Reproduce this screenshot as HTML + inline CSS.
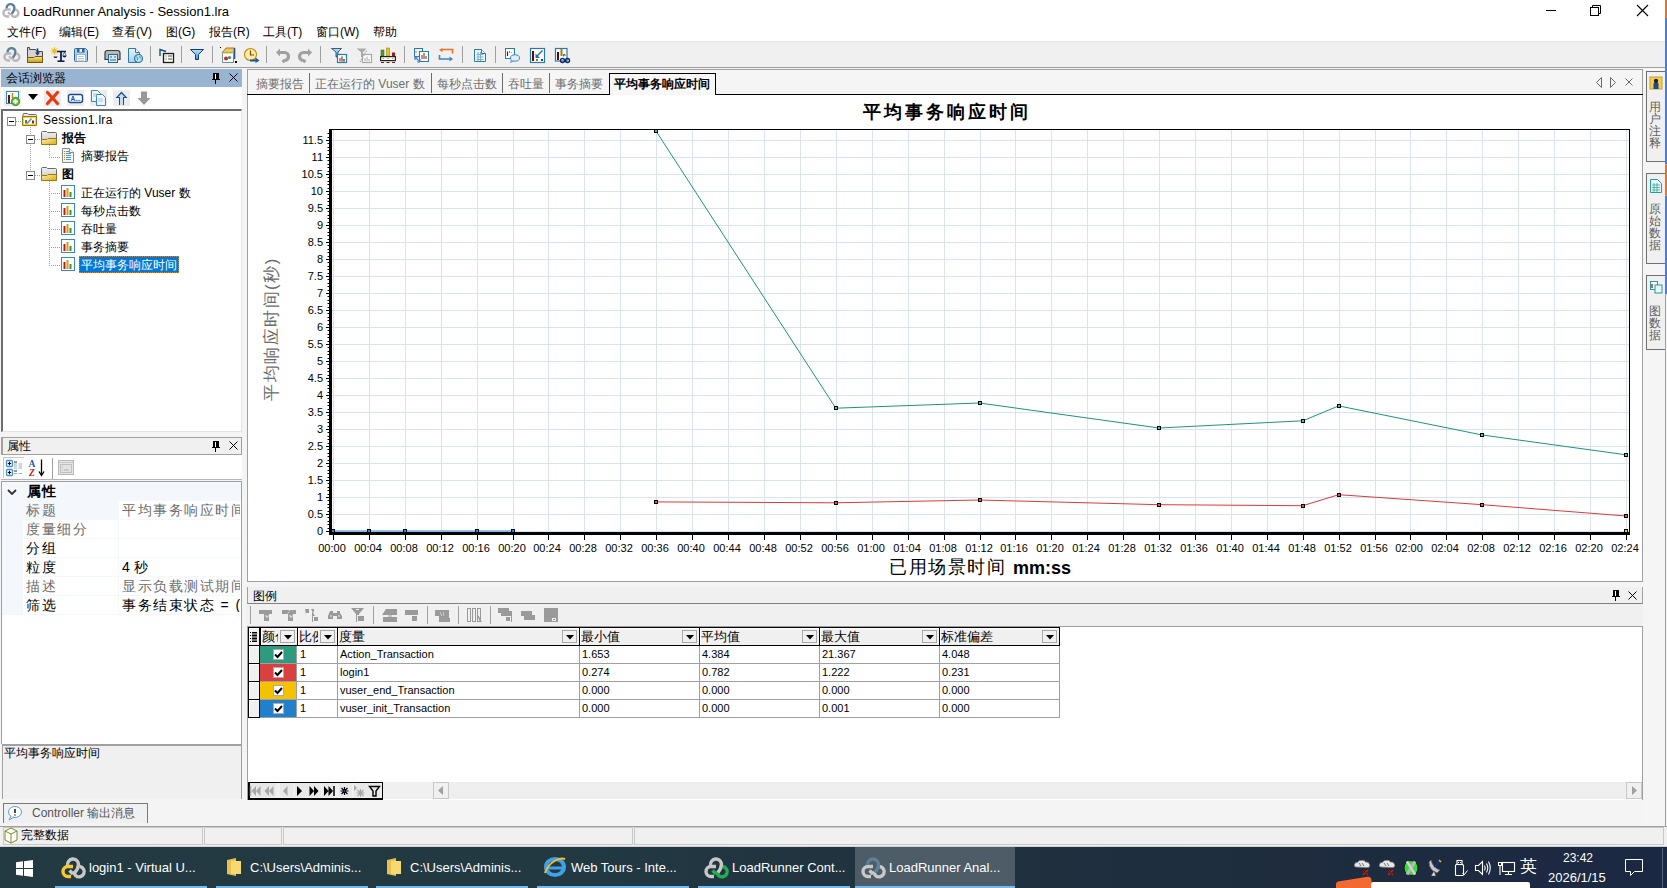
<!DOCTYPE html><html><head><meta charset="utf-8"><style>
*{margin:0;padding:0;box-sizing:border-box}
html,body{width:1667px;height:888px;overflow:hidden;background:#f0f0f0;font-family:"Liberation Sans",sans-serif;font-size:12px;color:#000}
.ab{position:absolute}
.t{position:absolute;white-space:nowrap;line-height:1}
svg{position:absolute;overflow:visible}
</style></head><body>
<div class="ab" style="left:0px;top:0px;width:1667px;height:41px;background:#fff"></div>
<svg style="left:2px;top:2px" width="17" height="17" viewBox="0 0 24 24"><path d="M12 15.5L14.5 19.5A5.2 5.2 0 1 0 18.5 10.5" fill="none" stroke="#b9b9b9" stroke-width="3.4"/><path d="M12 10.5H7A5 5 0 0 0 7 20.5H10" fill="none" stroke="#b9b9b9" stroke-width="3.4"/><path d="M6.5 9A5.5 5.5 0 0 1 17.5 8Q17.5 12 14 16.5" fill="none" stroke="#5f8099" stroke-width="3.4"/><path d="M8.5 14.5L12 18" fill="none" stroke="#b9b9b9" stroke-width="3.4"/></svg>
<div class="t" style="left:23px;top:5px;font-size:13px">LoadRunner Analysis - Session1.lra</div>
<div class="ab" style="left:1546px;top:10px;width:10px;height:1px;background:#000"></div>
<svg style="left:1589px;top:4px" width="14" height="13"><rect x="1.5" y="3.5" width="8" height="8" fill="none" stroke="#000"/><path d="M3.5 3.5V1.5h8v8h-2" fill="none" stroke="#000"/></svg>
<svg style="left:1636px;top:4px" width="13" height="13"><path d="M1 1L12 12M12 1L1 12" stroke="#000" stroke-width="1.1"/></svg>
<div class="t" style="left:7px;top:26px;font-size:12px">文件(F)</div>
<div class="t" style="left:59px;top:26px;font-size:12px">编辑(E)</div>
<div class="t" style="left:112px;top:26px;font-size:12px">查看(V)</div>
<div class="t" style="left:166px;top:26px;font-size:12px">图(G)</div>
<div class="t" style="left:209px;top:26px;font-size:12px">报告(R)</div>
<div class="t" style="left:263px;top:26px;font-size:12px">工具(T)</div>
<div class="t" style="left:316px;top:26px;font-size:12px">窗口(W)</div>
<div class="t" style="left:373px;top:26px;font-size:12px">帮助</div>
<div class="ab" style="left:0px;top:41px;width:1667px;height:1px;background:#e3e3e3"></div>
<div class="ab" style="left:0px;top:42px;width:1667px;height:25px;background:#f0f0f0"></div>
<div class="ab" style="left:0px;top:67px;width:1667px;height:1px;background:#a0a0a0"></div>
<div class="ab" style="left:96px;top:46px;width:1px;height:17px;background:#a0a0a0"></div>
<div class="ab" style="left:150px;top:46px;width:1px;height:17px;background:#a0a0a0"></div>
<div class="ab" style="left:181px;top:46px;width:1px;height:17px;background:#a0a0a0"></div>
<div class="ab" style="left:212px;top:46px;width:1px;height:17px;background:#a0a0a0"></div>
<div class="ab" style="left:266px;top:46px;width:1px;height:17px;background:#a0a0a0"></div>
<div class="ab" style="left:320px;top:46px;width:1px;height:17px;background:#a0a0a0"></div>
<div class="ab" style="left:404px;top:46px;width:1px;height:17px;background:#a0a0a0"></div>
<div class="ab" style="left:462px;top:46px;width:1px;height:17px;background:#a0a0a0"></div>
<div class="ab" style="left:495px;top:46px;width:1px;height:17px;background:#a0a0a0"></div>
<svg style="left:0;top:0" width="1" height="1"><defs><linearGradient id="gy" x1="0" y1="0" x2="0" y2="1"><stop offset="0" stop-color="#f8e890"/><stop offset="1" stop-color="#c89a10"/></linearGradient><linearGradient id="gb" x1="0" y1="0" x2="0" y2="1"><stop offset="0" stop-color="#e8f4fc"/><stop offset="1" stop-color="#a8d0ec"/></linearGradient><linearGradient id="gf" x1="0" y1="0" x2="0" y2="1"><stop offset="0" stop-color="#b8e4fa"/><stop offset="1" stop-color="#3a9ad8"/></linearGradient></defs></svg>
<svg style="left:3px;top:46px" width="17" height="17" viewBox="0 0 24 24"><path d="M12 15.5L14.5 19.5A5.2 5.2 0 1 0 18.5 10.5" fill="none" stroke="#b9b9b9" stroke-width="3.4"/><path d="M12 10.5H7A5 5 0 0 0 7 20.5H10" fill="none" stroke="#b9b9b9" stroke-width="3.4"/><path d="M6.5 9A5.5 5.5 0 0 1 17.5 8Q17.5 12 14 16.5" fill="none" stroke="#5f8099" stroke-width="3.4"/><path d="M8.5 14.5L12 18" fill="none" stroke="#b9b9b9" stroke-width="3.4"/></svg>
<svg style="left:27px;top:47px" width="17" height="16" viewBox="0 0 17 16"><path d="M0.5 15.5V0.5H2.5V2.5H8.5L10 4.5H15.5V15.5z" fill="#d4d4d4" stroke="#4a4a4a"/><path d="M0.5 15.5V10.5H7L8 9.5H15.5V15.5z" fill="url(#gy)" stroke="#6a5a10"/><path d="M10.5 1.5V7.5" stroke="#1a3a78" stroke-width="1.8"/><path d="M8 5.5L10.5 8.5L13 5.5z" fill="#1a3a78"/></svg>
<svg style="left:51px;top:47px" width="15" height="15" viewBox="0 0 15 15"><circle cx="3.5" cy="4" r="2.2" fill="#f2b400"/><path d="M3.5 0V8M-0.5 4H7.5M0.7 1.2L6.3 6.8M6.3 1.2L0.7 6.8" stroke="#f2c030" stroke-width="0.9"/><path d="M6 4.5H15" stroke="#0a2050" stroke-width="1.5"/><path d="M10 4V14" stroke="#0a2050" stroke-width="1.8"/><path d="M6.5 14.2H13.5" stroke="#0a2050" stroke-width="1.6"/><path d="M2.5 9.5a2 1.6 0 0 0 4 0z" fill="#0a2050"/><path d="M11.5 8.5a2 2 0 0 0 4 0z" fill="#0a2050"/><path d="M13.5 5L11.8 8.5M13.5 5L15.2 8.5" stroke="#0a2050" stroke-width="0.6"/></svg>
<svg style="left:74px;top:48px" width="14" height="14" viewBox="0 0 14 14"><path d="M0.5 1.5Q0.5 0.5 1.5 0.5H11.5L13.5 2.5V12.5Q13.5 13.5 12.5 13.5H1.5Q0.5 13.5 0.5 12.5z" fill="#a8d2ee" stroke="#2a6a9a"/><rect x="3" y="0.5" width="7.5" height="4" fill="#34678f"/><rect x="5.5" y="1" width="2.5" height="3" fill="#e8e8e8"/><rect x="2.5" y="6.5" width="9" height="7" fill="#fff" stroke="#7a9ab0" stroke-width="0.6"/><path d="M4 8.5H10M4 10.5H10M4 12.2H10" stroke="#9ab0c0" stroke-width="0.7"/></svg>
<svg style="left:104px;top:48px" width="17" height="15" viewBox="0 0 17 15"><path d="M1 11.5V5Q1 2.5 3.5 2.5H13.5Q16 2.5 16 5V11.5z" fill="#b8b8b8" stroke="#3a3a3a" stroke-width="1.2"/><rect x="4.5" y="6.5" width="9" height="8" fill="#d8eaf6" stroke="#1e6a9e"/><path d="M6 9H8M6 12H12M10 9H12" stroke="#1e6a9e"/></svg>
<svg style="left:128px;top:48px" width="15" height="15" viewBox="0 0 15 15"><path d="M0.5 0.5H7.5L11.5 4.5V14.5H0.5z" fill="url(#gb)" stroke="#2a7aaa"/><path d="M7.5 0.5V4.5H11.5" fill="#fff" stroke="#2a7aaa"/><circle cx="10.5" cy="10.5" r="4" fill="#b8dcf2" stroke="#2a7aaa" stroke-width="1.2"/><path d="M8.5 8.5Q10 10 9.5 12M11.5 8Q12 10 13 10.5" stroke="#2a7aaa" stroke-width="0.8" fill="none"/></svg>
<svg style="left:159px;top:48px" width="15" height="15" viewBox="0 0 15 15"><path d="M1 8V1.5L7 3.5" fill="none" stroke="#1a4a8a" stroke-width="1.4"/><rect x="4.5" y="5.5" width="10" height="9" fill="#f8f8f0" stroke="#1a1a1a" stroke-width="1.3"/><path d="M6.5 8H7.5M6.5 11H7.5M9 8H13M9 11H13" stroke="#555" stroke-width="1.2"/></svg>
<svg style="left:190px;top:49px" width="14" height="11" viewBox="0 0 14 11"><path d="M0.5 0.5H13.5L8.5 5.5V10.5H5.5V5.5z" fill="url(#gf)" stroke="#1a3a5a"/></svg>
<svg style="left:220px;top:47px" width="17" height="16" viewBox="0 0 17 16"><path d="M2 6L6 1H14.5V6z" fill="#e8c860" stroke="#a08020"/><path d="M14.5 1V12" stroke="#2a4a9a" stroke-width="1.6"/><path d="M2.5 6.5V15.5H13.5V6.5" fill="#fff" stroke="#6a8ab0"/><circle cx="6" cy="11.5" r="2" fill="#d02030"/><circle cx="9.5" cy="10.5" r="1.6" fill="#20a040"/><rect x="15" y="14" width="2" height="2" fill="#000"/><rect x="0" y="0" width="1" height="1" fill="#000"/></svg>
<svg style="left:244px;top:48px" width="16" height="15" viewBox="0 0 16 15"><circle cx="6.5" cy="6.5" r="6" fill="#fde9a8" stroke="#c8880a" stroke-width="1.1"/><path d="M6.5 2.5V7H10" stroke="#7a5000" stroke-width="1.2" fill="none"/><path d="M6 12.5H12" stroke="#1a5a9a" stroke-width="2"/><path d="M11.5 9.5L15.5 12.5L11.5 15z" fill="#1a5a9a"/></svg>
<svg style="left:276px;top:48px" width="14" height="15" viewBox="0 0 14 15"><path d="M3 4.5H8.5A4 4 0 0 1 8.5 12.5L6.5 14" fill="none" stroke="#a0a0a0" stroke-width="3.2"/><path d="M0 4.5L4 0.5V8.5z" fill="#a0a0a0"/></svg>
<svg style="left:298px;top:48px" width="14" height="15" viewBox="0 0 14 15"><path d="M11 4.5H5.5A4 4 0 0 0 5.5 12.5L7.5 14" fill="none" stroke="#a0a0a0" stroke-width="3.2"/><path d="M14 4.5L10 0.5V8.5z" fill="#a0a0a0"/></svg>
<svg style="left:331px;top:48px" width="16" height="15" viewBox="0 0 16 15"><path d="M0.5 0.5H10.5L7 4V9H5V4z" fill="url(#gf)" stroke="#1a3a5a" stroke-width="0.8"/><rect x="6.5" y="6.5" width="9" height="8" fill="#fff" stroke="#2a7aaa" stroke-width="1.2"/><path d="M9 13.5V10M11 13.5V8.5M13 13.5V11" stroke="#8a1a1a" stroke-width="1"/><path d="M11 13.5V8.5" stroke="#b09010"/><path d="M13 13.5V11" stroke="#307030"/></svg>
<svg style="left:356px;top:48px" width="16" height="15" viewBox="0 0 16 15"><path d="M0.5 0.5H10.5L7 4V9H5V4z" fill="#a8a8a8"/><rect x="6.5" y="6.5" width="9" height="8" fill="#fff" stroke="#a8a8a8" stroke-width="1.2"/><path d="M9 13.5V10M11 13.5V8.5M13 13.5V11" stroke="#a8a8a8"/><path d="M4 14L11 2" stroke="#a8a8a8" stroke-width="1.2" stroke-dasharray="1.5 0.8"/></svg>
<svg style="left:380px;top:48px" width="16" height="15" viewBox="0 0 16 15"><rect x="1" y="2" width="3" height="6" fill="#4aa020" stroke="#2a6010" stroke-width="0.5"/><rect x="6.5" y="0" width="3" height="8" fill="#e8c020" stroke="#8a7010" stroke-width="0.5"/><rect x="12" y="4.5" width="3" height="3.5" fill="#b01010"/><rect x="0.6" y="8.6" width="14.8" height="4" fill="#fff" stroke="#222" stroke-width="1.2"/><path d="M2.5 10.6H4M7.5 10.6H9M12 10.6H13.5" stroke="#c0a020"/><path d="M1 14.5H4M6.5 14.5H9.5M12 14.5H15" stroke="#6a1a1a" stroke-width="1"/></svg>
<svg style="left:414px;top:48px" width="15" height="15" viewBox="0 0 15 15"><rect x="0.5" y="0.5" width="8" height="8" fill="none" stroke="#2a7aaa"/><rect x="5.5" y="3.5" width="9" height="10" fill="#fff" stroke="#2a7aaa"/><path d="M8 11V7M10 11V5M12 11V8" stroke="#8a1a1a"/><path d="M2 3.5V4.5" stroke="#8a1a1a"/><path d="M1 9L6 14M1 9V12M1 9H4M6 14H3M6 14V11" stroke="#3a8ad0" stroke-width="1.2" fill="none"/></svg>
<svg style="left:439px;top:48px" width="14" height="14" viewBox="0 0 14 14"><path d="M13.5 5.5V1.5H2.5" fill="none" stroke="#f07020" stroke-width="1.6"/><path d="M3.5 0L0 2L3.5 4z" fill="#f07020"/><path d="M0.5 7V11H11" fill="none" stroke="#3a88c8" stroke-width="1.6"/><path d="M10.5 8.5L14 11L10.5 13.5z" fill="#3a88c8"/></svg>
<svg style="left:474px;top:49px" width="12" height="13" viewBox="0 0 12 13"><path d="M0.5 0.5H7.5L11.5 4.5V12.5H0.5z" fill="#f0f8fc" stroke="#2a7aaa"/><path d="M7.5 0.5V4.5H11.5" fill="#fff" stroke="#2a7aaa"/><path d="M2.5 5.5H9.5M2.5 8H9.5M2.5 10.5H9.5M4 3V12M6.5 3V12" stroke="#7ab0d0" stroke-width="1"/></svg>
<svg style="left:505px;top:48px" width="15" height="15" viewBox="0 0 15 15"><rect x="0.5" y="0.5" width="9" height="10" fill="#fff" stroke="#2a7aaa"/><path d="M2.5 8V3.5" stroke="#7a1010" stroke-width="1.2"/><path d="M4.5 5V3" stroke="#b09010"/><path d="M6.5 5V4.5" stroke="#307030"/><ellipse cx="10" cy="10" rx="4.5" ry="3.2" fill="#dff0fa" stroke="#3a8ac8"/><path d="M6.5 12L5.5 14.5L8.5 13" fill="#dff0fa" stroke="#3a8ac8" stroke-width="0.8"/></svg>
<svg style="left:530px;top:48px" width="15" height="15" viewBox="0 0 15 15"><rect x="0.5" y="0.5" width="14" height="14" fill="#fff" stroke="#2a7aaa" stroke-width="1.2"/><rect x="2" y="3" width="2" height="10" fill="#5a0a0a"/><path d="M12.5 2.5L6.5 8.5" stroke="#2a6aaa" stroke-width="1.4"/><path d="M5.5 5.5V10H10z" fill="#2a6aaa"/><rect x="6" y="11" width="2" height="2" fill="#9a7a10"/><rect x="11" y="11" width="2" height="2" fill="#1a5a1a"/></svg>
<svg style="left:555px;top:48px" width="15" height="15" viewBox="0 0 15 15"><rect x="0.5" y="0.5" width="11.5" height="12.5" fill="#fff" stroke="#2a7aaa" stroke-width="1.2"/><rect x="2" y="4" width="2" height="8" fill="#5a0a0a"/><rect x="5.5" y="1" width="2" height="7" fill="#a08010"/><path d="M8.5 8.5V6.5H10V8" stroke="#2a7a2a" fill="none"/><circle cx="7.5" cy="12.5" r="2" fill="none" stroke="#0a2a6a" stroke-width="1.4"/><circle cx="12.5" cy="12.5" r="2" fill="none" stroke="#0a2a6a" stroke-width="1.4"/></svg>
<div class="ab" style="left:0px;top:68px;width:243px;height:780px;background:#f4f4f4"></div>
<div class="ab" style="left:1px;top:69px;width:241px;height:18px;background:#99b4d1"></div>
<div class="t" style="left:6px;top:72px;font-size:12px">会话浏览器</div>
<svg style="left:212px;top:73px" width="8" height="11"><path d="M1 0h6v6h1v1H0V6h1zM3 7h1v4H3z" fill="#000"/><rect x="3" y="1" width="1" height="5" fill="#fff"/></svg>
<svg style="left:229px;top:73px" width="9" height="9"><path d="M0.5 0.5L8.5 8.5M8.5 0.5L0.5 8.5" stroke="#000" stroke-width="1"/></svg>
<div class="ab" style="left:1px;top:87px;width:241px;height:22px;background:#fff"></div>
<svg style="left:4px;top:90px" width="17" height="16" viewBox="0 0 17 16"><rect x="0" y="0" width="17" height="16" fill="#ececec"/><rect x="2.5" y="1.5" width="12" height="12" fill="#fff" stroke="#3d86c6"/><path d="M5 13V5" stroke="#6a1010" stroke-width="2"/><path d="M8.5 8V3" stroke="#b09010" stroke-width="1.5"/><circle cx="11.5" cy="11.5" r="4.2" fill="#60b838" stroke="#3a8a20" stroke-width="0.8"/><path d="M11.5 9v5M9 11.5h5" stroke="#fff" stroke-width="1.8"/></svg>
<svg style="left:28px;top:94px" width="10" height="6"><path d="M0 0h10L5 6z" fill="#000"/></svg>
<svg style="left:44px;top:90px" width="17" height="16" viewBox="0 0 17 16"><rect x="0" y="0" width="17" height="16" fill="#ececec"/><path d="M3.5 2.5L13.5 13.5M13.5 2.5L3.5 13.5" stroke="#e83a10" stroke-width="3.2" stroke-linecap="round"/></svg>
<svg style="left:67px;top:90px" width="17" height="16" viewBox="0 0 17 16"><rect x="0" y="0" width="17" height="16" fill="#ececec"/><rect x="1.5" y="4.5" width="14" height="8" rx="2" fill="#fff" stroke="#1a4a8a" stroke-width="1.4"/><text x="3.5" y="11" font-family="Liberation Sans" font-size="6.5" font-weight="bold" fill="#1a4a8a">A...</text></svg>
<svg style="left:90px;top:90px" width="17" height="16" viewBox="0 0 17 16"><rect x="0" y="0" width="17" height="16" fill="#ececec"/><path d="M1.5 0.5H7.5L10.5 3.5V11.5H1.5z" fill="#eef5fb" stroke="#3d86c6"/><path d="M6.5 4.5H12.5L15.5 7.5V15.5H6.5z" fill="#eef5fb" stroke="#3d86c6"/><path d="M3 4H7M3 6H7M8 9H13M8 11H13" stroke="#9ab8d0" stroke-width="0.8"/></svg>
<svg style="left:113px;top:90px" width="17" height="16" viewBox="0 0 17 16"><rect x="0" y="0" width="17" height="16" fill="#ececec"/><path d="M8.5 1.5L2.5 8H6V15H11V8H14.5z" fill="#1a4a8a"/><path d="M8.5 3.5L5 7H7V15H10V7H12z" fill="#c8dcf0"/></svg>
<svg style="left:137px;top:91px" width="14" height="15" viewBox="0 0 14 15"><path d="M4 0.5H10V7H13.5L7 14L0.5 7H4z" fill="#999"/></svg>
<div class="ab" style="left:1px;top:109px;width:241px;height:323px;background:#fff;border-left:2px solid #6d6d6d;border-top:2px solid #6d6d6d;border-right:1px solid #e3e3e3;border-bottom:1px solid #e3e3e3"></div>
<svg style="left:7px;top:117px" width="9" height="9"><rect x="0.5" y="0.5" width="8" height="8" fill="#fff" stroke="#8a8a8a"/><path d="M2 4.5h5" stroke="#000"/></svg>
<div class="ab" style="left:16px;top:121px;width:6px;height:1px;background-image:linear-gradient(90deg,#a0a0a0 50%,transparent 50%);background-size:2px 1px"></div>
<svg style="left:22px;top:113px" width="15" height="13"><path d="M1 4V1.5Q1 0.5 2 0.5H5.5L6.5 1.5H13.5Q14.5 1.5 14.5 2.5V4" fill="#e8e8e8" stroke="#6a6a6a"/><path d="M0.5 3.5H14.5V12.5H0.5z" fill="#f0d050" stroke="#9a7a00"/><rect x="2" y="5" width="11" height="6" fill="#fff"/><path d="M4 10.5V7" stroke="#206020" stroke-width="1.6"/><path d="M5 10.5L9.5 5.5" stroke="#808080" stroke-width="1.4"/><path d="M11 10.5V7.5" stroke="#801010" stroke-width="1.8"/></svg>
<div class="t" style="left:43px;top:114px;font-size:12px;letter-spacing:0.3px">Session1.lra</div>
<div class="ab" style="left:30px;top:127px;width:1px;height:44px;background-image:linear-gradient(#a0a0a0 50%,transparent 50%);background-size:1px 2px"></div>
<svg style="left:26px;top:135px" width="9" height="9"><rect x="0.5" y="0.5" width="8" height="8" fill="#fff" stroke="#8a8a8a"/><path d="M2 4.5h5" stroke="#000"/></svg>
<div class="ab" style="left:35px;top:139px;width:6px;height:1px;background-image:linear-gradient(90deg,#a0a0a0 50%,transparent 50%);background-size:2px 1px"></div>
<svg style="left:41px;top:131px" width="16" height="14"><defs><linearGradient id="fg41131" x1="0" y1="0" x2="0" y2="1"><stop offset="0" stop-color="#f0f0f0"/><stop offset="1" stop-color="#c4c4c4"/></linearGradient><linearGradient id="fy41131" x1="0" y1="0" x2="1" y2="1"><stop offset="0" stop-color="#fff4b0"/><stop offset="1" stop-color="#d8a818"/></linearGradient></defs><path d="M0.5 13V1.5Q0.5 0.5 1.5 0.5H5.5L6.5 1.5H14.5Q15.5 1.5 15.5 2.5V13z" fill="url(#fg41131)" stroke="#6a6a6a"/><path d="M0.5 13.5V8.5H6L7 7.5H15.5V13.5z" fill="url(#fy41131)" stroke="#9a7a00"/></svg>
<div class="t" style="left:62px;top:132px;font-size:12px"><b>报告</b></div>
<div class="ab" style="left:49px;top:145px;width:1px;height:12px;background-image:linear-gradient(#a0a0a0 50%,transparent 50%);background-size:1px 2px"></div>
<div class="ab" style="left:49px;top:157px;width:11px;height:1px;background-image:linear-gradient(90deg,#a0a0a0 50%,transparent 50%);background-size:2px 1px"></div>
<svg style="left:62px;top:148px" width="12" height="15"><path d="M0.5 0.5H7.5L11.5 4.5V14.5H0.5z" fill="#f4f4f4" stroke="#8a8a8a"/><path d="M7.5 0.5V4.5H11.5" fill="#fff" stroke="#8a8a8a"/><path d="M4 3.5H7M4 5.5H9M4 7.5H9M4 9.5H9M4 11.5H9" stroke="#4a9ad0" stroke-width="1"/><path d="M2 3.5H3M2 5.5H3M2 7.5H3M2 9.5H3M2 11.5H3" stroke="#d08010" stroke-width="1"/></svg>
<div class="t" style="left:81px;top:150px;font-size:12px">摘要报告</div>
<svg style="left:26px;top:171px" width="9" height="9"><rect x="0.5" y="0.5" width="8" height="8" fill="#fff" stroke="#8a8a8a"/><path d="M2 4.5h5" stroke="#000"/></svg>
<div class="ab" style="left:35px;top:175px;width:6px;height:1px;background-image:linear-gradient(90deg,#a0a0a0 50%,transparent 50%);background-size:2px 1px"></div>
<svg style="left:41px;top:167px" width="16" height="14"><defs><linearGradient id="fg41167" x1="0" y1="0" x2="0" y2="1"><stop offset="0" stop-color="#f0f0f0"/><stop offset="1" stop-color="#c4c4c4"/></linearGradient><linearGradient id="fy41167" x1="0" y1="0" x2="1" y2="1"><stop offset="0" stop-color="#fff4b0"/><stop offset="1" stop-color="#d8a818"/></linearGradient></defs><path d="M0.5 13V1.5Q0.5 0.5 1.5 0.5H5.5L6.5 1.5H14.5Q15.5 1.5 15.5 2.5V13z" fill="url(#fg41167)" stroke="#6a6a6a"/><path d="M0.5 13.5V8.5H6L7 7.5H15.5V13.5z" fill="url(#fy41167)" stroke="#9a7a00"/></svg>
<div class="t" style="left:62px;top:168px;font-size:12px"><b>图</b></div>
<div class="ab" style="left:49px;top:181px;width:1px;height:83px;background-image:linear-gradient(#a0a0a0 50%,transparent 50%);background-size:1px 2px"></div>
<div class="ab" style="left:49px;top:193px;width:11px;height:1px;background-image:linear-gradient(90deg,#a0a0a0 50%,transparent 50%);background-size:2px 1px"></div>
<svg style="left:61px;top:185px" width="14" height="14"><rect x="0.5" y="0.5" width="13" height="13" fill="#fff" stroke="#3d86c6"/><path d="M3.5 12V5" stroke="#b02020" stroke-width="2"/><path d="M6.5 12V3" stroke="#d0a010" stroke-width="2"/><path d="M9.5 12V7" stroke="#409030" stroke-width="2"/></svg>
<div class="t" style="left:81px;top:187px;font-size:12px">正在运行的 Vuser 数</div>
<div class="ab" style="left:49px;top:211px;width:11px;height:1px;background-image:linear-gradient(90deg,#a0a0a0 50%,transparent 50%);background-size:2px 1px"></div>
<svg style="left:61px;top:203px" width="14" height="14"><rect x="0.5" y="0.5" width="13" height="13" fill="#fff" stroke="#3d86c6"/><path d="M3.5 12V5" stroke="#b02020" stroke-width="2"/><path d="M6.5 12V3" stroke="#d0a010" stroke-width="2"/><path d="M9.5 12V7" stroke="#409030" stroke-width="2"/></svg>
<div class="t" style="left:81px;top:205px;font-size:12px">每秒点击数</div>
<div class="ab" style="left:49px;top:229px;width:11px;height:1px;background-image:linear-gradient(90deg,#a0a0a0 50%,transparent 50%);background-size:2px 1px"></div>
<svg style="left:61px;top:221px" width="14" height="14"><rect x="0.5" y="0.5" width="13" height="13" fill="#fff" stroke="#3d86c6"/><path d="M3.5 12V5" stroke="#b02020" stroke-width="2"/><path d="M6.5 12V3" stroke="#d0a010" stroke-width="2"/><path d="M9.5 12V7" stroke="#409030" stroke-width="2"/></svg>
<div class="t" style="left:81px;top:223px;font-size:12px">吞吐量</div>
<div class="ab" style="left:49px;top:247px;width:11px;height:1px;background-image:linear-gradient(90deg,#a0a0a0 50%,transparent 50%);background-size:2px 1px"></div>
<svg style="left:61px;top:239px" width="14" height="14"><rect x="0.5" y="0.5" width="13" height="13" fill="#fff" stroke="#3d86c6"/><path d="M3.5 12V5" stroke="#b02020" stroke-width="2"/><path d="M6.5 12V3" stroke="#d0a010" stroke-width="2"/><path d="M9.5 12V7" stroke="#409030" stroke-width="2"/></svg>
<div class="t" style="left:81px;top:241px;font-size:12px">事务摘要</div>
<div class="ab" style="left:49px;top:265px;width:11px;height:1px;background-image:linear-gradient(90deg,#a0a0a0 50%,transparent 50%);background-size:2px 1px"></div>
<svg style="left:61px;top:257px" width="14" height="14"><rect x="0.5" y="0.5" width="13" height="13" fill="#fff" stroke="#3d86c6"/><path d="M3.5 12V5" stroke="#b02020" stroke-width="2"/><path d="M6.5 12V3" stroke="#d0a010" stroke-width="2"/><path d="M9.5 12V7" stroke="#409030" stroke-width="2"/></svg>
<div class="ab" style="left:79px;top:256px;width:100px;height:17px;background:#0078d7;border:1px dotted #e08020"></div>
<div class="t" style="left:81px;top:259px;font-size:12px;color:#fff">平均事务响应时间</div>
<div class="ab" style="left:1px;top:437px;width:241px;height:18px;background:#f0f0f0;border:1px solid #a0a0a0;border-left:2px solid #a0a0a0"></div>
<div class="t" style="left:7px;top:440px;font-size:12px">属性</div>
<svg style="left:212px;top:441px" width="8" height="11"><path d="M1 0h6v6h1v1H0V6h1zM3 7h1v4H3z" fill="#000"/><rect x="3" y="1" width="1" height="5" fill="#fff"/></svg>
<svg style="left:229px;top:441px" width="9" height="9"><path d="M0.5 0.5L8.5 8.5M8.5 0.5L0.5 8.5" stroke="#000" stroke-width="1"/></svg>
<div class="ab" style="left:1px;top:455px;width:241px;height:25px;background:#fff"></div>
<div class="ab" style="left:3px;top:457px;width:21px;height:21px;border:1px solid #c8c8c8;border-right:none;border-bottom:none"></div>
<svg style="left:5px;top:459px" width="18" height="18" viewBox="0 0 18 18"><rect x="1.5" y="1.5" width="6" height="6" rx="1" fill="#fff" stroke="#4a90d8" stroke-width="1.3"/><rect x="1.5" y="10.5" width="6" height="6" rx="1" fill="#fff" stroke="#4a90d8" stroke-width="1.3"/><path d="M4.5 2.8V6.2M2.8 4.5H6.2M4.5 11.8V15.2M2.8 13.5H6.2" stroke="#000" stroke-width="1.2"/><path d="M9 3H12M9 12H12" stroke="#333"/><path d="M9 5H12M9 7H12M9 9H12M9 14.5H12M13.5 5H17M13.5 7H17M13.5 9H17M13.5 14.5H17" stroke="#7aa0b0" stroke-width="0.8"/></svg>
<svg style="left:28px;top:459px" width="16" height="18" viewBox="0 0 16 18"><text x="0.5" y="7.5" font-family="Liberation Serif" font-size="9.5" font-weight="bold" fill="#2a50c8">A</text><text x="1" y="16.5" font-family="Liberation Serif" font-size="9.5" font-weight="bold" font-style="italic" fill="#b82020">Z</text><path d="M13.5 0.5V16" stroke="#000" stroke-width="1.3"/><path d="M11 12.5L13.5 16.5L16 12.5" stroke="#000" stroke-width="1.3" fill="none"/></svg>
<div class="ab" style="left:52px;top:458px;width:1px;height:21px;background:#a0a0a0"></div>
<div class="ab" style="left:1px;top:479px;width:241px;height:1px;background:#b4b4b4"></div>
<svg style="left:58px;top:460px" width="16" height="15" viewBox="0 0 16 15"><rect x="0.5" y="0.5" width="15" height="14" fill="#e4e4e4" stroke="#b8b8b8"/><path d="M1 2.5H15" stroke="#c8c8c8"/><rect x="2.5" y="4.5" width="11" height="8" fill="none" stroke="#c0c0c0"/><path d="M4 7H5M4 10H5M6 10H11" stroke="#b0b0b0"/></svg>
<div class="ab" style="left:1px;top:481px;width:241px;height:263px;background:#fff;border-left:1px solid #a0a0a0;border-right:1px solid #a0a0a0;border-top:1px solid #a0a0a0"></div>
<div class="ab" style="left:2px;top:482px;width:239px;height:133px;background:#f4f7fc"></div>
<svg style="left:7px;top:489px" width="10" height="7"><path d="M1 1L5 5L9 1" stroke="#333" stroke-width="1.8" fill="none"/></svg>
<div class="t" style="left:27px;top:484px;font-size:14px;letter-spacing:1px"><b>属性</b></div>
<div class="ab" style="left:23px;top:501px;width:95px;height:18px;background:#f4f7fc"></div>
<div class="ab" style="left:119px;top:501px;width:122px;height:18px;background:#fff;overflow:hidden"></div>
<div class="t" style="left:26px;top:503px;font-size:14px;color:#6d6d6d;letter-spacing:1.5px">标题</div>
<div class="t" style="left:122px;top:503px;width:118px;overflow:hidden;font-size:14px;color:#6d6d6d;letter-spacing:1.5px">平均事务响应时间</div>
<div class="ab" style="left:23px;top:520px;width:95px;height:18px;background:#fff"></div>
<div class="ab" style="left:119px;top:520px;width:122px;height:18px;background:#fff;overflow:hidden"></div>
<div class="t" style="left:26px;top:522px;font-size:14px;color:#6d6d6d;letter-spacing:1.5px">度量细分</div>
<div class="t" style="left:122px;top:522px;width:118px;overflow:hidden;font-size:14px;color:#6d6d6d;letter-spacing:1.5px"></div>
<div class="ab" style="left:23px;top:539px;width:95px;height:18px;background:#fff"></div>
<div class="ab" style="left:119px;top:539px;width:122px;height:18px;background:#fff;overflow:hidden"></div>
<div class="t" style="left:26px;top:541px;font-size:14px;color:#000;letter-spacing:1.5px">分组</div>
<div class="t" style="left:122px;top:541px;width:118px;overflow:hidden;font-size:14px;color:#000;letter-spacing:1.5px"></div>
<div class="ab" style="left:23px;top:558px;width:95px;height:18px;background:#fff"></div>
<div class="ab" style="left:119px;top:558px;width:122px;height:18px;background:#fff;overflow:hidden"></div>
<div class="t" style="left:26px;top:560px;font-size:14px;color:#000;letter-spacing:1.5px">粒度</div>
<div class="t" style="left:122px;top:560px;width:118px;overflow:hidden;font-size:14px;color:#000;letter-spacing:1.5px"><span style="letter-spacing:0">4 </span>秒</div>
<div class="ab" style="left:23px;top:577px;width:95px;height:18px;background:#fff"></div>
<div class="ab" style="left:119px;top:577px;width:122px;height:18px;background:#fff;overflow:hidden"></div>
<div class="t" style="left:26px;top:579px;font-size:14px;color:#6d6d6d;letter-spacing:1.5px">描述</div>
<div class="t" style="left:122px;top:579px;width:118px;overflow:hidden;font-size:14px;color:#6d6d6d;letter-spacing:1.5px">显示负载测试期间</div>
<div class="ab" style="left:23px;top:596px;width:95px;height:18px;background:#fff"></div>
<div class="ab" style="left:119px;top:596px;width:122px;height:18px;background:#fff;overflow:hidden"></div>
<div class="t" style="left:26px;top:598px;font-size:14px;color:#000;letter-spacing:1.5px">筛选</div>
<div class="t" style="left:122px;top:598px;width:118px;overflow:hidden;font-size:14px;color:#000;letter-spacing:1.5px">事务结束状态 = (P</div>
<div class="ab" style="left:2px;top:744px;width:240px;height:55px;background:#f0f0f0;border-top:2px solid #a0a0a0;border-left:1px solid #a0a0a0;border-right:1px solid #a0a0a0"></div>
<div class="t" style="left:4px;top:747px;font-size:12px">平均事务响应时间</div>
<div class="ab" style="left:243px;top:68px;width:1400px;height:780px;background:#f4f4f4"></div>
<div class="ab" style="left:247px;top:69px;width:1396px;height:26px;background:#f5f5f5;border-top:1px solid #a0a0a0;border-left:1px solid #a0a0a0;border-right:1px solid #a0a0a0"></div>
<div class="ab" style="left:247px;top:94px;width:1396px;height:1px;background:#000"></div>
<div class="t" style="left:256px;top:78px;font-size:12px;color:#6d6d6d">摘要报告</div>
<div class="ab" style="left:309px;top:73px;width:1px;height:20px;background:#6d6d6d"></div>
<div class="t" style="left:315px;top:78px;font-size:12px;color:#6d6d6d">正在运行的 Vuser 数</div>
<div class="ab" style="left:431px;top:73px;width:1px;height:20px;background:#6d6d6d"></div>
<div class="t" style="left:437px;top:78px;font-size:12px;color:#6d6d6d">每秒点击数</div>
<div class="ab" style="left:502px;top:73px;width:1px;height:20px;background:#6d6d6d"></div>
<div class="t" style="left:508px;top:78px;font-size:12px;color:#6d6d6d">吞吐量</div>
<div class="ab" style="left:549px;top:73px;width:1px;height:20px;background:#6d6d6d"></div>
<div class="t" style="left:555px;top:78px;font-size:12px;color:#6d6d6d">事务摘要</div>
<div class="ab" style="left:609px;top:73px;width:107px;height:22px;background:#f7f7f7;border:1px solid #000;border-bottom:none"></div>
<div class="t" style="left:614px;top:78px;font-size:12px"><b>平均事务响应时间</b></div>
<svg style="left:1595px;top:77px" width="40" height="11"><path d="M6.5 0.5L1.5 5.5L6.5 10.5z" fill="none" stroke="#686868"/><path d="M15.5 0.5L20.5 5.5L15.5 10.5z" fill="none" stroke="#686868"/><path d="M30.5 1.5L37.5 8.5M37.5 1.5L30.5 8.5" stroke="#686868"/></svg>
<div class="ab" style="left:247px;top:95px;width:1396px;height:487px;background:#fff;border-left:1px solid #a0a0a0;border-right:1px solid #a0a0a0;border-bottom:1px solid #a0a0a0"></div>
<svg style="left:0;top:0" width="1667" height="888"><line x1="333.5" y1="130" x2="333.5" y2="532" stroke="#d8e4f2" stroke-width="1"/><line x1="369.5" y1="130" x2="369.5" y2="532" stroke="#d8e4f2" stroke-width="1"/><line x1="405.5" y1="130" x2="405.5" y2="532" stroke="#d8e4f2" stroke-width="1"/><line x1="441.5" y1="130" x2="441.5" y2="532" stroke="#d8e4f2" stroke-width="1"/><line x1="477.5" y1="130" x2="477.5" y2="532" stroke="#d8e4f2" stroke-width="1"/><line x1="513.5" y1="130" x2="513.5" y2="532" stroke="#d8e4f2" stroke-width="1"/><line x1="548.5" y1="130" x2="548.5" y2="532" stroke="#d8e4f2" stroke-width="1"/><line x1="584.5" y1="130" x2="584.5" y2="532" stroke="#d8e4f2" stroke-width="1"/><line x1="620.5" y1="130" x2="620.5" y2="532" stroke="#d8e4f2" stroke-width="1"/><line x1="656.5" y1="130" x2="656.5" y2="532" stroke="#d8e4f2" stroke-width="1"/><line x1="692.5" y1="130" x2="692.5" y2="532" stroke="#d8e4f2" stroke-width="1"/><line x1="728.5" y1="130" x2="728.5" y2="532" stroke="#d8e4f2" stroke-width="1"/><line x1="764.5" y1="130" x2="764.5" y2="532" stroke="#d8e4f2" stroke-width="1"/><line x1="800.5" y1="130" x2="800.5" y2="532" stroke="#d8e4f2" stroke-width="1"/><line x1="836.5" y1="130" x2="836.5" y2="532" stroke="#d8e4f2" stroke-width="1"/><line x1="872.5" y1="130" x2="872.5" y2="532" stroke="#d8e4f2" stroke-width="1"/><line x1="908.5" y1="130" x2="908.5" y2="532" stroke="#d8e4f2" stroke-width="1"/><line x1="944.5" y1="130" x2="944.5" y2="532" stroke="#d8e4f2" stroke-width="1"/><line x1="980.5" y1="130" x2="980.5" y2="532" stroke="#d8e4f2" stroke-width="1"/><line x1="1015.5" y1="130" x2="1015.5" y2="532" stroke="#d8e4f2" stroke-width="1"/><line x1="1051.5" y1="130" x2="1051.5" y2="532" stroke="#d8e4f2" stroke-width="1"/><line x1="1087.5" y1="130" x2="1087.5" y2="532" stroke="#d8e4f2" stroke-width="1"/><line x1="1123.5" y1="130" x2="1123.5" y2="532" stroke="#d8e4f2" stroke-width="1"/><line x1="1159.5" y1="130" x2="1159.5" y2="532" stroke="#d8e4f2" stroke-width="1"/><line x1="1195.5" y1="130" x2="1195.5" y2="532" stroke="#d8e4f2" stroke-width="1"/><line x1="1231.5" y1="130" x2="1231.5" y2="532" stroke="#d8e4f2" stroke-width="1"/><line x1="1267.5" y1="130" x2="1267.5" y2="532" stroke="#d8e4f2" stroke-width="1"/><line x1="1303.5" y1="130" x2="1303.5" y2="532" stroke="#d8e4f2" stroke-width="1"/><line x1="1339.5" y1="130" x2="1339.5" y2="532" stroke="#d8e4f2" stroke-width="1"/><line x1="1375.5" y1="130" x2="1375.5" y2="532" stroke="#d8e4f2" stroke-width="1"/><line x1="1410.5" y1="130" x2="1410.5" y2="532" stroke="#d8e4f2" stroke-width="1"/><line x1="1446.5" y1="130" x2="1446.5" y2="532" stroke="#d8e4f2" stroke-width="1"/><line x1="1482.5" y1="130" x2="1482.5" y2="532" stroke="#d8e4f2" stroke-width="1"/><line x1="1518.5" y1="130" x2="1518.5" y2="532" stroke="#d8e4f2" stroke-width="1"/><line x1="1554.5" y1="130" x2="1554.5" y2="532" stroke="#d8e4f2" stroke-width="1"/><line x1="1590.5" y1="130" x2="1590.5" y2="532" stroke="#d8e4f2" stroke-width="1"/><line x1="1626.5" y1="130" x2="1626.5" y2="532" stroke="#d8e4f2" stroke-width="1"/><line x1="331" y1="531.5" x2="1629" y2="531.5" stroke="#d8e4f2" stroke-width="1"/><line x1="331" y1="514.5" x2="1629" y2="514.5" stroke="#d8e4f2" stroke-width="1"/><line x1="331" y1="497.5" x2="1629" y2="497.5" stroke="#d8e4f2" stroke-width="1"/><line x1="331" y1="480.5" x2="1629" y2="480.5" stroke="#d8e4f2" stroke-width="1"/><line x1="331" y1="463.5" x2="1629" y2="463.5" stroke="#d8e4f2" stroke-width="1"/><line x1="331" y1="446.5" x2="1629" y2="446.5" stroke="#d8e4f2" stroke-width="1"/><line x1="331" y1="429.5" x2="1629" y2="429.5" stroke="#d8e4f2" stroke-width="1"/><line x1="331" y1="412.5" x2="1629" y2="412.5" stroke="#d8e4f2" stroke-width="1"/><line x1="331" y1="395.5" x2="1629" y2="395.5" stroke="#d8e4f2" stroke-width="1"/><line x1="331" y1="378.5" x2="1629" y2="378.5" stroke="#d8e4f2" stroke-width="1"/><line x1="331" y1="361.5" x2="1629" y2="361.5" stroke="#d8e4f2" stroke-width="1"/><line x1="331" y1="344.5" x2="1629" y2="344.5" stroke="#d8e4f2" stroke-width="1"/><line x1="331" y1="327.5" x2="1629" y2="327.5" stroke="#d8e4f2" stroke-width="1"/><line x1="331" y1="310.5" x2="1629" y2="310.5" stroke="#d8e4f2" stroke-width="1"/><line x1="331" y1="293.5" x2="1629" y2="293.5" stroke="#d8e4f2" stroke-width="1"/><line x1="331" y1="276.5" x2="1629" y2="276.5" stroke="#d8e4f2" stroke-width="1"/><line x1="331" y1="259.5" x2="1629" y2="259.5" stroke="#d8e4f2" stroke-width="1"/><line x1="331" y1="242.5" x2="1629" y2="242.5" stroke="#d8e4f2" stroke-width="1"/><line x1="331" y1="225.5" x2="1629" y2="225.5" stroke="#d8e4f2" stroke-width="1"/><line x1="331" y1="208.5" x2="1629" y2="208.5" stroke="#d8e4f2" stroke-width="1"/><line x1="331" y1="191.5" x2="1629" y2="191.5" stroke="#d8e4f2" stroke-width="1"/><line x1="331" y1="174.5" x2="1629" y2="174.5" stroke="#d8e4f2" stroke-width="1"/><line x1="331" y1="157.5" x2="1629" y2="157.5" stroke="#d8e4f2" stroke-width="1"/><line x1="331" y1="140.5" x2="1629" y2="140.5" stroke="#d8e4f2" stroke-width="1"/><rect x="329" y="129" width="1300.5" height="1" fill="#000"/><rect x="1629" y="129" width="1" height="406" fill="#000"/><rect x="329" y="129" width="3" height="406" fill="#000"/><rect x="329" y="532" width="1301" height="3" fill="#000"/><rect x="326" y="531" width="3" height="1" fill="#000"/><text x="323" y="535" text-anchor="end" font-family="Liberation Sans" font-size="11" fill="#000">0</text><rect x="326" y="514" width="3" height="1" fill="#000"/><text x="323" y="518" text-anchor="end" font-family="Liberation Sans" font-size="11" fill="#000">0.5</text><rect x="326" y="497" width="3" height="1" fill="#000"/><text x="323" y="501" text-anchor="end" font-family="Liberation Sans" font-size="11" fill="#000">1</text><rect x="326" y="480" width="3" height="1" fill="#000"/><text x="323" y="484" text-anchor="end" font-family="Liberation Sans" font-size="11" fill="#000">1.5</text><rect x="326" y="463" width="3" height="1" fill="#000"/><text x="323" y="467" text-anchor="end" font-family="Liberation Sans" font-size="11" fill="#000">2</text><rect x="326" y="446" width="3" height="1" fill="#000"/><text x="323" y="450" text-anchor="end" font-family="Liberation Sans" font-size="11" fill="#000">2.5</text><rect x="326" y="429" width="3" height="1" fill="#000"/><text x="323" y="433" text-anchor="end" font-family="Liberation Sans" font-size="11" fill="#000">3</text><rect x="326" y="412" width="3" height="1" fill="#000"/><text x="323" y="416" text-anchor="end" font-family="Liberation Sans" font-size="11" fill="#000">3.5</text><rect x="326" y="395" width="3" height="1" fill="#000"/><text x="323" y="399" text-anchor="end" font-family="Liberation Sans" font-size="11" fill="#000">4</text><rect x="326" y="378" width="3" height="1" fill="#000"/><text x="323" y="382" text-anchor="end" font-family="Liberation Sans" font-size="11" fill="#000">4.5</text><rect x="326" y="361" width="3" height="1" fill="#000"/><text x="323" y="365" text-anchor="end" font-family="Liberation Sans" font-size="11" fill="#000">5</text><rect x="326" y="344" width="3" height="1" fill="#000"/><text x="323" y="348" text-anchor="end" font-family="Liberation Sans" font-size="11" fill="#000">5.5</text><rect x="326" y="327" width="3" height="1" fill="#000"/><text x="323" y="331" text-anchor="end" font-family="Liberation Sans" font-size="11" fill="#000">6</text><rect x="326" y="310" width="3" height="1" fill="#000"/><text x="323" y="314" text-anchor="end" font-family="Liberation Sans" font-size="11" fill="#000">6.5</text><rect x="326" y="293" width="3" height="1" fill="#000"/><text x="323" y="297" text-anchor="end" font-family="Liberation Sans" font-size="11" fill="#000">7</text><rect x="326" y="276" width="3" height="1" fill="#000"/><text x="323" y="280" text-anchor="end" font-family="Liberation Sans" font-size="11" fill="#000">7.5</text><rect x="326" y="259" width="3" height="1" fill="#000"/><text x="323" y="263" text-anchor="end" font-family="Liberation Sans" font-size="11" fill="#000">8</text><rect x="326" y="242" width="3" height="1" fill="#000"/><text x="323" y="246" text-anchor="end" font-family="Liberation Sans" font-size="11" fill="#000">8.5</text><rect x="326" y="225" width="3" height="1" fill="#000"/><text x="323" y="229" text-anchor="end" font-family="Liberation Sans" font-size="11" fill="#000">9</text><rect x="326" y="208" width="3" height="1" fill="#000"/><text x="323" y="212" text-anchor="end" font-family="Liberation Sans" font-size="11" fill="#000">9.5</text><rect x="326" y="191" width="3" height="1" fill="#000"/><text x="323" y="195" text-anchor="end" font-family="Liberation Sans" font-size="11" fill="#000">10</text><rect x="326" y="174" width="3" height="1" fill="#000"/><text x="323" y="178" text-anchor="end" font-family="Liberation Sans" font-size="11" fill="#000">10.5</text><rect x="326" y="157" width="3" height="1" fill="#000"/><text x="323" y="161" text-anchor="end" font-family="Liberation Sans" font-size="11" fill="#000">11</text><rect x="326" y="140" width="3" height="1" fill="#000"/><text x="323" y="144" text-anchor="end" font-family="Liberation Sans" font-size="11" fill="#000">11.5</text><rect x="327.5" y="528" width="1.5" height="1" fill="#000"/><rect x="327.5" y="524" width="1.5" height="1" fill="#000"/><rect x="327.5" y="521" width="1.5" height="1" fill="#000"/><rect x="327.5" y="517" width="1.5" height="1" fill="#000"/><rect x="327.5" y="511" width="1.5" height="1" fill="#000"/><rect x="327.5" y="507" width="1.5" height="1" fill="#000"/><rect x="327.5" y="504" width="1.5" height="1" fill="#000"/><rect x="327.5" y="500" width="1.5" height="1" fill="#000"/><rect x="327.5" y="494" width="1.5" height="1" fill="#000"/><rect x="327.5" y="490" width="1.5" height="1" fill="#000"/><rect x="327.5" y="487" width="1.5" height="1" fill="#000"/><rect x="327.5" y="483" width="1.5" height="1" fill="#000"/><rect x="327.5" y="477" width="1.5" height="1" fill="#000"/><rect x="327.5" y="473" width="1.5" height="1" fill="#000"/><rect x="327.5" y="470" width="1.5" height="1" fill="#000"/><rect x="327.5" y="466" width="1.5" height="1" fill="#000"/><rect x="327.5" y="460" width="1.5" height="1" fill="#000"/><rect x="327.5" y="456" width="1.5" height="1" fill="#000"/><rect x="327.5" y="453" width="1.5" height="1" fill="#000"/><rect x="327.5" y="449" width="1.5" height="1" fill="#000"/><rect x="327.5" y="443" width="1.5" height="1" fill="#000"/><rect x="327.5" y="439" width="1.5" height="1" fill="#000"/><rect x="327.5" y="436" width="1.5" height="1" fill="#000"/><rect x="327.5" y="432" width="1.5" height="1" fill="#000"/><rect x="327.5" y="426" width="1.5" height="1" fill="#000"/><rect x="327.5" y="422" width="1.5" height="1" fill="#000"/><rect x="327.5" y="419" width="1.5" height="1" fill="#000"/><rect x="327.5" y="415" width="1.5" height="1" fill="#000"/><rect x="327.5" y="409" width="1.5" height="1" fill="#000"/><rect x="327.5" y="405" width="1.5" height="1" fill="#000"/><rect x="327.5" y="402" width="1.5" height="1" fill="#000"/><rect x="327.5" y="398" width="1.5" height="1" fill="#000"/><rect x="327.5" y="392" width="1.5" height="1" fill="#000"/><rect x="327.5" y="388" width="1.5" height="1" fill="#000"/><rect x="327.5" y="385" width="1.5" height="1" fill="#000"/><rect x="327.5" y="381" width="1.5" height="1" fill="#000"/><rect x="327.5" y="375" width="1.5" height="1" fill="#000"/><rect x="327.5" y="371" width="1.5" height="1" fill="#000"/><rect x="327.5" y="368" width="1.5" height="1" fill="#000"/><rect x="327.5" y="364" width="1.5" height="1" fill="#000"/><rect x="327.5" y="358" width="1.5" height="1" fill="#000"/><rect x="327.5" y="354" width="1.5" height="1" fill="#000"/><rect x="327.5" y="351" width="1.5" height="1" fill="#000"/><rect x="327.5" y="347" width="1.5" height="1" fill="#000"/><rect x="327.5" y="341" width="1.5" height="1" fill="#000"/><rect x="327.5" y="337" width="1.5" height="1" fill="#000"/><rect x="327.5" y="334" width="1.5" height="1" fill="#000"/><rect x="327.5" y="330" width="1.5" height="1" fill="#000"/><rect x="327.5" y="324" width="1.5" height="1" fill="#000"/><rect x="327.5" y="320" width="1.5" height="1" fill="#000"/><rect x="327.5" y="317" width="1.5" height="1" fill="#000"/><rect x="327.5" y="313" width="1.5" height="1" fill="#000"/><rect x="327.5" y="307" width="1.5" height="1" fill="#000"/><rect x="327.5" y="303" width="1.5" height="1" fill="#000"/><rect x="327.5" y="300" width="1.5" height="1" fill="#000"/><rect x="327.5" y="296" width="1.5" height="1" fill="#000"/><rect x="327.5" y="290" width="1.5" height="1" fill="#000"/><rect x="327.5" y="286" width="1.5" height="1" fill="#000"/><rect x="327.5" y="283" width="1.5" height="1" fill="#000"/><rect x="327.5" y="279" width="1.5" height="1" fill="#000"/><rect x="327.5" y="273" width="1.5" height="1" fill="#000"/><rect x="327.5" y="269" width="1.5" height="1" fill="#000"/><rect x="327.5" y="266" width="1.5" height="1" fill="#000"/><rect x="327.5" y="262" width="1.5" height="1" fill="#000"/><rect x="327.5" y="256" width="1.5" height="1" fill="#000"/><rect x="327.5" y="252" width="1.5" height="1" fill="#000"/><rect x="327.5" y="249" width="1.5" height="1" fill="#000"/><rect x="327.5" y="245" width="1.5" height="1" fill="#000"/><rect x="327.5" y="239" width="1.5" height="1" fill="#000"/><rect x="327.5" y="235" width="1.5" height="1" fill="#000"/><rect x="327.5" y="232" width="1.5" height="1" fill="#000"/><rect x="327.5" y="228" width="1.5" height="1" fill="#000"/><rect x="327.5" y="222" width="1.5" height="1" fill="#000"/><rect x="327.5" y="218" width="1.5" height="1" fill="#000"/><rect x="327.5" y="215" width="1.5" height="1" fill="#000"/><rect x="327.5" y="211" width="1.5" height="1" fill="#000"/><rect x="327.5" y="205" width="1.5" height="1" fill="#000"/><rect x="327.5" y="201" width="1.5" height="1" fill="#000"/><rect x="327.5" y="198" width="1.5" height="1" fill="#000"/><rect x="327.5" y="194" width="1.5" height="1" fill="#000"/><rect x="327.5" y="188" width="1.5" height="1" fill="#000"/><rect x="327.5" y="184" width="1.5" height="1" fill="#000"/><rect x="327.5" y="181" width="1.5" height="1" fill="#000"/><rect x="327.5" y="177" width="1.5" height="1" fill="#000"/><rect x="327.5" y="171" width="1.5" height="1" fill="#000"/><rect x="327.5" y="167" width="1.5" height="1" fill="#000"/><rect x="327.5" y="164" width="1.5" height="1" fill="#000"/><rect x="327.5" y="160" width="1.5" height="1" fill="#000"/><rect x="327.5" y="154" width="1.5" height="1" fill="#000"/><rect x="327.5" y="150" width="1.5" height="1" fill="#000"/><rect x="327.5" y="147" width="1.5" height="1" fill="#000"/><rect x="327.5" y="143" width="1.5" height="1" fill="#000"/><rect x="327.5" y="137" width="1.5" height="1" fill="#000"/><rect x="327.5" y="133" width="1.5" height="1" fill="#000"/><rect x="333" y="535" width="1" height="5" fill="#000"/><text x="332" y="552" text-anchor="middle" font-family="Liberation Sans" font-size="11" fill="#000">00:00</text><rect x="369" y="535" width="1" height="5" fill="#000"/><text x="368" y="552" text-anchor="middle" font-family="Liberation Sans" font-size="11" fill="#000">00:04</text><rect x="405" y="535" width="1" height="5" fill="#000"/><text x="404" y="552" text-anchor="middle" font-family="Liberation Sans" font-size="11" fill="#000">00:08</text><rect x="441" y="535" width="1" height="5" fill="#000"/><text x="440" y="552" text-anchor="middle" font-family="Liberation Sans" font-size="11" fill="#000">00:12</text><rect x="477" y="535" width="1" height="5" fill="#000"/><text x="476" y="552" text-anchor="middle" font-family="Liberation Sans" font-size="11" fill="#000">00:16</text><rect x="513" y="535" width="1" height="5" fill="#000"/><text x="512" y="552" text-anchor="middle" font-family="Liberation Sans" font-size="11" fill="#000">00:20</text><rect x="548" y="535" width="1" height="5" fill="#000"/><text x="547" y="552" text-anchor="middle" font-family="Liberation Sans" font-size="11" fill="#000">00:24</text><rect x="584" y="535" width="1" height="5" fill="#000"/><text x="583" y="552" text-anchor="middle" font-family="Liberation Sans" font-size="11" fill="#000">00:28</text><rect x="620" y="535" width="1" height="5" fill="#000"/><text x="619" y="552" text-anchor="middle" font-family="Liberation Sans" font-size="11" fill="#000">00:32</text><rect x="656" y="535" width="1" height="5" fill="#000"/><text x="655" y="552" text-anchor="middle" font-family="Liberation Sans" font-size="11" fill="#000">00:36</text><rect x="692" y="535" width="1" height="5" fill="#000"/><text x="691" y="552" text-anchor="middle" font-family="Liberation Sans" font-size="11" fill="#000">00:40</text><rect x="728" y="535" width="1" height="5" fill="#000"/><text x="727" y="552" text-anchor="middle" font-family="Liberation Sans" font-size="11" fill="#000">00:44</text><rect x="764" y="535" width="1" height="5" fill="#000"/><text x="763" y="552" text-anchor="middle" font-family="Liberation Sans" font-size="11" fill="#000">00:48</text><rect x="800" y="535" width="1" height="5" fill="#000"/><text x="799" y="552" text-anchor="middle" font-family="Liberation Sans" font-size="11" fill="#000">00:52</text><rect x="836" y="535" width="1" height="5" fill="#000"/><text x="835" y="552" text-anchor="middle" font-family="Liberation Sans" font-size="11" fill="#000">00:56</text><rect x="872" y="535" width="1" height="5" fill="#000"/><text x="871" y="552" text-anchor="middle" font-family="Liberation Sans" font-size="11" fill="#000">01:00</text><rect x="908" y="535" width="1" height="5" fill="#000"/><text x="907" y="552" text-anchor="middle" font-family="Liberation Sans" font-size="11" fill="#000">01:04</text><rect x="944" y="535" width="1" height="5" fill="#000"/><text x="943" y="552" text-anchor="middle" font-family="Liberation Sans" font-size="11" fill="#000">01:08</text><rect x="980" y="535" width="1" height="5" fill="#000"/><text x="979" y="552" text-anchor="middle" font-family="Liberation Sans" font-size="11" fill="#000">01:12</text><rect x="1015" y="535" width="1" height="5" fill="#000"/><text x="1014" y="552" text-anchor="middle" font-family="Liberation Sans" font-size="11" fill="#000">01:16</text><rect x="1051" y="535" width="1" height="5" fill="#000"/><text x="1050" y="552" text-anchor="middle" font-family="Liberation Sans" font-size="11" fill="#000">01:20</text><rect x="1087" y="535" width="1" height="5" fill="#000"/><text x="1086" y="552" text-anchor="middle" font-family="Liberation Sans" font-size="11" fill="#000">01:24</text><rect x="1123" y="535" width="1" height="5" fill="#000"/><text x="1122" y="552" text-anchor="middle" font-family="Liberation Sans" font-size="11" fill="#000">01:28</text><rect x="1159" y="535" width="1" height="5" fill="#000"/><text x="1158" y="552" text-anchor="middle" font-family="Liberation Sans" font-size="11" fill="#000">01:32</text><rect x="1195" y="535" width="1" height="5" fill="#000"/><text x="1194" y="552" text-anchor="middle" font-family="Liberation Sans" font-size="11" fill="#000">01:36</text><rect x="1231" y="535" width="1" height="5" fill="#000"/><text x="1230" y="552" text-anchor="middle" font-family="Liberation Sans" font-size="11" fill="#000">01:40</text><rect x="1267" y="535" width="1" height="5" fill="#000"/><text x="1266" y="552" text-anchor="middle" font-family="Liberation Sans" font-size="11" fill="#000">01:44</text><rect x="1303" y="535" width="1" height="5" fill="#000"/><text x="1302" y="552" text-anchor="middle" font-family="Liberation Sans" font-size="11" fill="#000">01:48</text><rect x="1339" y="535" width="1" height="5" fill="#000"/><text x="1338" y="552" text-anchor="middle" font-family="Liberation Sans" font-size="11" fill="#000">01:52</text><rect x="1375" y="535" width="1" height="5" fill="#000"/><text x="1374" y="552" text-anchor="middle" font-family="Liberation Sans" font-size="11" fill="#000">01:56</text><rect x="1410" y="535" width="1" height="5" fill="#000"/><text x="1409" y="552" text-anchor="middle" font-family="Liberation Sans" font-size="11" fill="#000">02:00</text><rect x="1446" y="535" width="1" height="5" fill="#000"/><text x="1445" y="552" text-anchor="middle" font-family="Liberation Sans" font-size="11" fill="#000">02:04</text><rect x="1482" y="535" width="1" height="5" fill="#000"/><text x="1481" y="552" text-anchor="middle" font-family="Liberation Sans" font-size="11" fill="#000">02:08</text><rect x="1518" y="535" width="1" height="5" fill="#000"/><text x="1517" y="552" text-anchor="middle" font-family="Liberation Sans" font-size="11" fill="#000">02:12</text><rect x="1554" y="535" width="1" height="5" fill="#000"/><text x="1553" y="552" text-anchor="middle" font-family="Liberation Sans" font-size="11" fill="#000">02:16</text><rect x="1590" y="535" width="1" height="5" fill="#000"/><text x="1589" y="552" text-anchor="middle" font-family="Liberation Sans" font-size="11" fill="#000">02:20</text><rect x="1626" y="535" width="1" height="5" fill="#000"/><text x="1625" y="552" text-anchor="middle" font-family="Liberation Sans" font-size="11" fill="#000">02:24</text><polyline points="333.0,531.0 368.9,531.0 404.8,531.0 476.7,531.0 512.6,531.0" fill="none" stroke="#2a88d8" stroke-width="1"/><rect x="331.5" y="529.5" width="3" height="3" fill="#2a88d8" stroke="#000" stroke-width="1"/><rect x="367.5" y="529.5" width="3" height="3" fill="#2a88d8" stroke="#000" stroke-width="1"/><rect x="403.5" y="529.5" width="3" height="3" fill="#2a88d8" stroke="#000" stroke-width="1"/><rect x="475.5" y="529.5" width="3" height="3" fill="#2a88d8" stroke="#000" stroke-width="1"/><rect x="511.5" y="529.5" width="3" height="3" fill="#2a88d8" stroke="#000" stroke-width="1"/><polyline points="656.2,501.9 835.8,502.8 979.5,500.0 1159.1,504.7 1302.8,505.7 1338.7,494.7 1482.3,504.7 1626.0,516.0" fill="none" stroke="#d83c3c" stroke-width="1"/><rect x="654.5" y="500.5" width="3" height="3" fill="#f05050" stroke="#000" stroke-width="1"/><rect x="834.5" y="501.5" width="3" height="3" fill="#f05050" stroke="#000" stroke-width="1"/><rect x="978.5" y="498.5" width="3" height="3" fill="#f05050" stroke="#000" stroke-width="1"/><rect x="1157.5" y="503.5" width="3" height="3" fill="#f05050" stroke="#000" stroke-width="1"/><rect x="1301.5" y="504.5" width="3" height="3" fill="#f05050" stroke="#000" stroke-width="1"/><rect x="1337.5" y="493.5" width="3" height="3" fill="#f05050" stroke="#000" stroke-width="1"/><rect x="1480.5" y="503.5" width="3" height="3" fill="#f05050" stroke="#000" stroke-width="1"/><rect x="1624.5" y="514.5" width="3" height="3" fill="#f05050" stroke="#000" stroke-width="1"/><polyline points="656.2,131.3 835.8,408.2 979.5,403.0 1159.1,428.0 1302.8,420.8 1338.7,405.9 1482.3,435.0 1626.0,454.8" fill="none" stroke="#1e9478" stroke-width="1"/><rect x="654.5" y="129.5" width="3" height="3" fill="#3cc8a0" stroke="#000" stroke-width="1"/><rect x="834.5" y="406.5" width="3" height="3" fill="#3cc8a0" stroke="#000" stroke-width="1"/><rect x="978.5" y="401.5" width="3" height="3" fill="#3cc8a0" stroke="#000" stroke-width="1"/><rect x="1157.5" y="426.5" width="3" height="3" fill="#3cc8a0" stroke="#000" stroke-width="1"/><rect x="1301.5" y="419.5" width="3" height="3" fill="#3cc8a0" stroke="#000" stroke-width="1"/><rect x="1337.5" y="404.5" width="3" height="3" fill="#3cc8a0" stroke="#000" stroke-width="1"/><rect x="1480.5" y="433.5" width="3" height="3" fill="#3cc8a0" stroke="#000" stroke-width="1"/><rect x="1624.5" y="453.5" width="3" height="3" fill="#3cc8a0" stroke="#000" stroke-width="1"/><rect x="1624.5" y="529.5" width="3" height="3" fill="#f5d000" stroke="#000" stroke-width="1"/><text x="947" y="118" text-anchor="middle" font-family="Liberation Sans" font-size="18" font-weight="600" letter-spacing="3" fill="#000">平均事务响应时间</text><text x="889" y="573" font-family="Liberation Sans" font-size="18" letter-spacing="1.6" fill="#000">已用场景时间</text><text x="1013" y="574" font-family="Liberation Sans" font-size="18" font-weight="bold" fill="#000">mm:ss</text><text transform="translate(277,329) rotate(-90)" text-anchor="middle" font-family="Liberation Sans" font-size="17" letter-spacing="1.5" fill="#6a6a6a">平均响应时间(秒)</text></svg>
<div class="ab" style="left:247px;top:587px;width:1396px;height:17px;background:#f0f0f0;border-left:1px solid #a0a0a0;border-right:1px solid #a0a0a0;border-bottom:1px solid #808080"></div>
<div class="t" style="left:253px;top:590px;font-size:12px">图例</div>
<svg style="left:1612px;top:590px" width="8" height="11"><path d="M1 0h6v6h1v1H0V6h1zM3 7h1v4H3z" fill="#000"/><rect x="3" y="1" width="1" height="5" fill="#fff"/></svg>
<svg style="left:1628px;top:591px" width="9" height="9"><path d="M0.5 0.5L8.5 8.5M8.5 0.5L0.5 8.5" stroke="#000" stroke-width="1"/></svg>
<div class="ab" style="left:247px;top:604px;width:1396px;height:23px;background:#f0f0f0"></div>
<div class="ab" style="left:250px;top:606px;width:1px;height:18px;background:#a0a0a0"></div>
<div class="ab" style="left:373px;top:606px;width:1px;height:18px;background:#a0a0a0"></div>
<div class="ab" style="left:427px;top:606px;width:1px;height:18px;background:#a0a0a0"></div>
<div class="ab" style="left:458px;top:606px;width:1px;height:18px;background:#a0a0a0"></div>
<div class="ab" style="left:490px;top:606px;width:1px;height:18px;background:#a0a0a0"></div>
<svg style="left:259px;top:610px" width="16" height="16" viewBox="0 0 16 16"><path d="M0 0H13V4H10V11H5V4H0z" fill="#9a9a9a"/><path d="M6 6H8V8M9 6H11V8" stroke="#f0f0f0" fill="none"/></svg>
<svg style="left:282px;top:607px" width="16" height="16" viewBox="0 0 16 16"><path d="M0 3H14V7H11V14H6V7H0z" fill="#9a9a9a"/><path d="M3 11L9 1" stroke="#f0f0f0" stroke-dasharray="1 1"/><path d="M7 9H9V11M10 9H12V11" stroke="#f0f0f0" fill="none"/></svg>
<svg style="left:305px;top:608px" width="16" height="16" viewBox="0 0 16 16"><path d="M0 1H4V5H1V7M6 1H9V4H7V14H14V8H10z" fill="#9a9a9a"/><rect x="8.5" y="8.5" width="5" height="5" fill="none" stroke="#f0f0f0"/></svg>
<svg style="left:328px;top:610px" width="16" height="16" viewBox="0 0 16 16"><path d="M2 1H5V3H9V1H12V3L14 6V9H9V6H5V9H0V6z" fill="#9a9a9a"/><path d="M2 6H4M10 6H12" stroke="#f0f0f0"/></svg>
<svg style="left:351px;top:608px" width="16" height="16" viewBox="0 0 16 16"><path d="M0 0H13L8 6V14H5V6z" fill="#9a9a9a"/><rect x="6.5" y="7.5" width="7" height="6" fill="#9a9a9a" stroke="#f0f0f0"/><path d="M5 1.5H8" stroke="#f0f0f0"/></svg>
<svg style="left:382px;top:609px" width="16" height="16" viewBox="0 0 16 16"><path d="M4 0H15V6H10V8H15V13H1V8H6V6H0z" fill="#9a9a9a"/><path d="M0 7H15" stroke="#f0f0f0"/></svg>
<svg style="left:405px;top:609px" width="16" height="16" viewBox="0 0 16 16"><path d="M0 1H13V13H6V6H0z" fill="#9a9a9a"/><rect x="6.5" y="6.5" width="6" height="6" fill="none" stroke="#f0f0f0"/></svg>
<svg style="left:435px;top:609px" width="16" height="16" viewBox="0 0 16 16"><path d="M0 1H14V9H15V13H4V7H0z" fill="#9a9a9a"/><path d="M5 4H6M8 4H9M6 6H7M8 6H9" stroke="#f0f0f0"/></svg>
<svg style="left:467px;top:608px" width="16" height="16" viewBox="0 0 16 16"><rect x="0.5" y="0.5" width="3" height="13" fill="none" stroke="#9a9a9a"/><rect x="5.5" y="0.5" width="3" height="13" fill="none" stroke="#9a9a9a"/><rect x="10.5" y="0.5" width="3" height="13" fill="none" stroke="#9a9a9a"/><path d="M11 8L14 14" stroke="#9a9a9a" stroke-width="1.5"/></svg>
<svg style="left:498px;top:608px" width="16" height="16" viewBox="0 0 16 16"><path d="M0 0H11V3H14V14H7V8H3V5H0z" fill="#9a9a9a"/><rect x="7.5" y="8.5" width="5" height="5" fill="none" stroke="#f0f0f0"/></svg>
<svg style="left:521px;top:611px" width="16" height="16" viewBox="0 0 16 16"><path d="M0 0H11V4H14V9H3V5H0z" fill="#9a9a9a"/></svg>
<svg style="left:544px;top:608px" width="16" height="16" viewBox="0 0 16 16"><path d="M0 0H14V14H0z" fill="#9a9a9a"/><rect x="8.5" y="10.5" width="3" height="2" fill="none" stroke="#f0f0f0"/></svg>
<div class="ab" style="left:247px;top:626px;width:1396px;height:174px;background:#fff;border-left:1px solid #a0a0a0;border-right:1px solid #a0a0a0;border-top:1px solid #a0a0a0"></div>
<div class="ab" style="left:248px;top:627px;width:812px;height:19px;background:#000"></div>
<div class="ab" style="left:249px;top:628px;width:10px;height:17px;background:#f0f0f0;border-top:1px solid #fff;border-left:1px solid #fff"></div>
<svg style="left:250px;top:631px" width="8" height="11"><path d="M0 1.5h1M0 4.5h1M0 7.5h1M0 10.5h1M2 1.5h5M2 4.5h5M2 7.5h5M2 10.5h5M2 3h5M2 6h5M2 9h5" stroke="#000" stroke-width="1"/></svg>
<div class="ab" style="left:261px;top:628px;width:36px;height:17px;background:#f0f0f0;border-top:1px solid #fff;border-left:1px solid #fff"></div>
<div class="t" style="left:262px;top:630px;width:16px;overflow:hidden;font-size:13px">颜色</div>
<div class="ab" style="left:280px;top:630px;width:15px;height:13px;background:#f0f0f0;border:1px solid #a8a8a8"></div>
<svg style="left:284px;top:635px" width="8" height="5"><path d="M0 0h8L4 4.5z" fill="#000"/></svg>
<div class="ab" style="left:298px;top:628px;width:39px;height:17px;background:#f0f0f0;border-top:1px solid #fff;border-left:1px solid #fff"></div>
<div class="t" style="left:299px;top:630px;width:19px;overflow:hidden;font-size:13px">比例</div>
<div class="ab" style="left:320px;top:630px;width:15px;height:13px;background:#f0f0f0;border:1px solid #a8a8a8"></div>
<svg style="left:324px;top:635px" width="8" height="5"><path d="M0 0h8L4 4.5z" fill="#000"/></svg>
<div class="ab" style="left:338px;top:628px;width:241px;height:17px;background:#f0f0f0;border-top:1px solid #fff;border-left:1px solid #fff"></div>
<div class="t" style="left:339px;top:630px;font-size:13px">度量</div>
<div class="ab" style="left:562px;top:630px;width:15px;height:13px;background:#f0f0f0;border:1px solid #a8a8a8"></div>
<svg style="left:566px;top:635px" width="8" height="5"><path d="M0 0h8L4 4.5z" fill="#000"/></svg>
<div class="ab" style="left:580px;top:628px;width:119px;height:17px;background:#f0f0f0;border-top:1px solid #fff;border-left:1px solid #fff"></div>
<div class="t" style="left:581px;top:630px;font-size:13px">最小值</div>
<div class="ab" style="left:682px;top:630px;width:15px;height:13px;background:#f0f0f0;border:1px solid #a8a8a8"></div>
<svg style="left:686px;top:635px" width="8" height="5"><path d="M0 0h8L4 4.5z" fill="#000"/></svg>
<div class="ab" style="left:700px;top:628px;width:119px;height:17px;background:#f0f0f0;border-top:1px solid #fff;border-left:1px solid #fff"></div>
<div class="t" style="left:701px;top:630px;font-size:13px">平均值</div>
<div class="ab" style="left:802px;top:630px;width:15px;height:13px;background:#f0f0f0;border:1px solid #a8a8a8"></div>
<svg style="left:806px;top:635px" width="8" height="5"><path d="M0 0h8L4 4.5z" fill="#000"/></svg>
<div class="ab" style="left:820px;top:628px;width:119px;height:17px;background:#f0f0f0;border-top:1px solid #fff;border-left:1px solid #fff"></div>
<div class="t" style="left:821px;top:630px;font-size:13px">最大值</div>
<div class="ab" style="left:922px;top:630px;width:15px;height:13px;background:#f0f0f0;border:1px solid #a8a8a8"></div>
<svg style="left:926px;top:635px" width="8" height="5"><path d="M0 0h8L4 4.5z" fill="#000"/></svg>
<div class="ab" style="left:940px;top:628px;width:119px;height:17px;background:#f0f0f0;border-top:1px solid #fff;border-left:1px solid #fff"></div>
<div class="t" style="left:941px;top:630px;font-size:13px">标准偏差</div>
<div class="ab" style="left:1042px;top:630px;width:15px;height:13px;background:#f0f0f0;border:1px solid #a8a8a8"></div>
<svg style="left:1046px;top:635px" width="8" height="5"><path d="M0 0h8L4 4.5z" fill="#000"/></svg>
<div class="ab" style="left:248px;top:645px;width:12px;height:19px;background:#000"></div>
<div class="ab" style="left:249px;top:646px;width:10px;height:17px;background:#f0f0f0;border-top:1px solid #fff;border-left:1px solid #fff"></div>
<div class="ab" style="left:260px;top:646px;width:37px;height:18px;background:#2e9a7e;border-bottom:1px solid #a0a0a0;border-right:1px solid #a0a0a0"></div>
<div class="ab" style="left:273px;top:649px;width:11px;height:11px;background:#fff;border:1px solid #b8a8a8"></div>
<svg style="left:274px;top:651px" width="9" height="8"><path d="M1 3.5l2.5 2.5L8 1" stroke="#000" stroke-width="2" fill="none"/></svg>
<div class="ab" style="left:297px;top:646px;width:41px;height:18px;border-right:1px solid #a0a0a0;border-bottom:1px solid #a0a0a0"></div>
<div class="t" style="left:300px;top:649px;font-size:11px">1</div>
<div class="ab" style="left:337px;top:646px;width:243px;height:18px;border-right:1px solid #a0a0a0;border-bottom:1px solid #a0a0a0"></div>
<div class="t" style="left:340px;top:649px;font-size:11px">Action_Transaction</div>
<div class="ab" style="left:579px;top:646px;width:121px;height:18px;border-right:1px solid #a0a0a0;border-bottom:1px solid #a0a0a0"></div>
<div class="t" style="left:582px;top:649px;font-size:11px">1.653</div>
<div class="ab" style="left:699px;top:646px;width:121px;height:18px;border-right:1px solid #a0a0a0;border-bottom:1px solid #a0a0a0"></div>
<div class="t" style="left:702px;top:649px;font-size:11px">4.384</div>
<div class="ab" style="left:819px;top:646px;width:121px;height:18px;border-right:1px solid #a0a0a0;border-bottom:1px solid #a0a0a0"></div>
<div class="t" style="left:822px;top:649px;font-size:11px">21.367</div>
<div class="ab" style="left:939px;top:646px;width:121px;height:18px;border-right:1px solid #a0a0a0;border-bottom:1px solid #a0a0a0"></div>
<div class="t" style="left:942px;top:649px;font-size:11px">4.048</div>
<div class="ab" style="left:248px;top:663px;width:12px;height:19px;background:#000"></div>
<div class="ab" style="left:249px;top:664px;width:10px;height:17px;background:#f0f0f0;border-top:1px solid #fff;border-left:1px solid #fff"></div>
<div class="ab" style="left:260px;top:664px;width:37px;height:18px;background:#d94141;border-bottom:1px solid #a0a0a0;border-right:1px solid #a0a0a0"></div>
<div class="ab" style="left:273px;top:667px;width:11px;height:11px;background:#fff;border:1px solid #b8a8a8"></div>
<svg style="left:274px;top:669px" width="9" height="8"><path d="M1 3.5l2.5 2.5L8 1" stroke="#000" stroke-width="2" fill="none"/></svg>
<div class="ab" style="left:297px;top:664px;width:41px;height:18px;border-right:1px solid #a0a0a0;border-bottom:1px solid #a0a0a0"></div>
<div class="t" style="left:300px;top:667px;font-size:11px">1</div>
<div class="ab" style="left:337px;top:664px;width:243px;height:18px;border-right:1px solid #a0a0a0;border-bottom:1px solid #a0a0a0"></div>
<div class="t" style="left:340px;top:667px;font-size:11px">login1</div>
<div class="ab" style="left:579px;top:664px;width:121px;height:18px;border-right:1px solid #a0a0a0;border-bottom:1px solid #a0a0a0"></div>
<div class="t" style="left:582px;top:667px;font-size:11px">0.274</div>
<div class="ab" style="left:699px;top:664px;width:121px;height:18px;border-right:1px solid #a0a0a0;border-bottom:1px solid #a0a0a0"></div>
<div class="t" style="left:702px;top:667px;font-size:11px">0.782</div>
<div class="ab" style="left:819px;top:664px;width:121px;height:18px;border-right:1px solid #a0a0a0;border-bottom:1px solid #a0a0a0"></div>
<div class="t" style="left:822px;top:667px;font-size:11px">1.222</div>
<div class="ab" style="left:939px;top:664px;width:121px;height:18px;border-right:1px solid #a0a0a0;border-bottom:1px solid #a0a0a0"></div>
<div class="t" style="left:942px;top:667px;font-size:11px">0.231</div>
<div class="ab" style="left:248px;top:681px;width:12px;height:19px;background:#000"></div>
<div class="ab" style="left:249px;top:682px;width:10px;height:17px;background:#f0f0f0;border-top:1px solid #fff;border-left:1px solid #fff"></div>
<div class="ab" style="left:260px;top:682px;width:37px;height:18px;background:#f5c200;border-bottom:1px solid #a0a0a0;border-right:1px solid #a0a0a0"></div>
<div class="ab" style="left:273px;top:685px;width:11px;height:11px;background:#fff;border:1px solid #b8a8a8"></div>
<svg style="left:274px;top:687px" width="9" height="8"><path d="M1 3.5l2.5 2.5L8 1" stroke="#000" stroke-width="2" fill="none"/></svg>
<div class="ab" style="left:297px;top:682px;width:41px;height:18px;border-right:1px solid #a0a0a0;border-bottom:1px solid #a0a0a0"></div>
<div class="t" style="left:300px;top:685px;font-size:11px">1</div>
<div class="ab" style="left:337px;top:682px;width:243px;height:18px;border-right:1px solid #a0a0a0;border-bottom:1px solid #a0a0a0"></div>
<div class="t" style="left:340px;top:685px;font-size:11px">vuser_end_Transaction</div>
<div class="ab" style="left:579px;top:682px;width:121px;height:18px;border-right:1px solid #a0a0a0;border-bottom:1px solid #a0a0a0"></div>
<div class="t" style="left:582px;top:685px;font-size:11px">0.000</div>
<div class="ab" style="left:699px;top:682px;width:121px;height:18px;border-right:1px solid #a0a0a0;border-bottom:1px solid #a0a0a0"></div>
<div class="t" style="left:702px;top:685px;font-size:11px">0.000</div>
<div class="ab" style="left:819px;top:682px;width:121px;height:18px;border-right:1px solid #a0a0a0;border-bottom:1px solid #a0a0a0"></div>
<div class="t" style="left:822px;top:685px;font-size:11px">0.000</div>
<div class="ab" style="left:939px;top:682px;width:121px;height:18px;border-right:1px solid #a0a0a0;border-bottom:1px solid #a0a0a0"></div>
<div class="t" style="left:942px;top:685px;font-size:11px">0.000</div>
<div class="ab" style="left:248px;top:699px;width:12px;height:19px;background:#000"></div>
<div class="ab" style="left:249px;top:700px;width:10px;height:17px;background:#f0f0f0;border-top:1px solid #fff;border-left:1px solid #fff"></div>
<div class="ab" style="left:260px;top:700px;width:37px;height:18px;background:#2080cc;border-bottom:1px solid #a0a0a0;border-right:1px solid #a0a0a0"></div>
<div class="ab" style="left:273px;top:703px;width:11px;height:11px;background:#fff;border:1px solid #b8a8a8"></div>
<svg style="left:274px;top:705px" width="9" height="8"><path d="M1 3.5l2.5 2.5L8 1" stroke="#000" stroke-width="2" fill="none"/></svg>
<div class="ab" style="left:297px;top:700px;width:41px;height:18px;border-right:1px solid #a0a0a0;border-bottom:1px solid #a0a0a0"></div>
<div class="t" style="left:300px;top:703px;font-size:11px">1</div>
<div class="ab" style="left:337px;top:700px;width:243px;height:18px;border-right:1px solid #a0a0a0;border-bottom:1px solid #a0a0a0"></div>
<div class="t" style="left:340px;top:703px;font-size:11px">vuser_init_Transaction</div>
<div class="ab" style="left:579px;top:700px;width:121px;height:18px;border-right:1px solid #a0a0a0;border-bottom:1px solid #a0a0a0"></div>
<div class="t" style="left:582px;top:703px;font-size:11px">0.000</div>
<div class="ab" style="left:699px;top:700px;width:121px;height:18px;border-right:1px solid #a0a0a0;border-bottom:1px solid #a0a0a0"></div>
<div class="t" style="left:702px;top:703px;font-size:11px">0.000</div>
<div class="ab" style="left:819px;top:700px;width:121px;height:18px;border-right:1px solid #a0a0a0;border-bottom:1px solid #a0a0a0"></div>
<div class="t" style="left:822px;top:703px;font-size:11px">0.001</div>
<div class="ab" style="left:939px;top:700px;width:121px;height:18px;border-right:1px solid #a0a0a0;border-bottom:1px solid #a0a0a0"></div>
<div class="t" style="left:942px;top:703px;font-size:11px">0.000</div>
<div class="ab" style="left:248px;top:782px;width:1394px;height:17px;background:#f0f0f0"></div>
<div class="ab" style="left:449px;top:782px;width:1177px;height:17px;background-color:#f4f4f4;background-image:linear-gradient(45deg,#e8e8e8 25%,transparent 25%,transparent 75%,#e8e8e8 75%),linear-gradient(45deg,#e8e8e8 25%,transparent 25%,transparent 75%,#e8e8e8 75%);background-size:2px 2px;background-position:0 0,1px 1px;opacity:0.6"></div>
<div class="ab" style="left:248px;top:782px;width:135px;height:18px;background:#f0f0f0;border:1px solid #000;border-left-width:2px;border-bottom-width:2px"></div>
<div class="ab" style="left:250px;top:783px;width:13px;height:14px;background:#e8e8e8"></div>
<div class="ab" style="left:263px;top:783px;width:13px;height:14px;background:#e8e8e8"></div>
<div class="ab" style="left:280px;top:783px;width:13px;height:14px;background:#e8e8e8"></div>
<div class="ab" style="left:295px;top:783px;width:13px;height:14px;background:#e8e8e8"></div>
<div class="ab" style="left:308px;top:783px;width:13px;height:14px;background:#e8e8e8"></div>
<div class="ab" style="left:322px;top:783px;width:13px;height:14px;background:#e8e8e8"></div>
<div class="ab" style="left:339px;top:783px;width:13px;height:14px;background:#e8e8e8"></div>
<div class="ab" style="left:354px;top:783px;width:13px;height:14px;background:#e8e8e8"></div>
<div class="ab" style="left:367px;top:783px;width:13px;height:14px;background:#e8e8e8"></div>
<svg style="left:249px;top:785px" width="134" height="12"><path d="M1.5 1v10" stroke="#a8a8a8" stroke-width="1.5"/><path d="M7 1L2.5 6L7 11zM11.5 1L7 6L11.5 11z" fill="#a8a8a8"/><path d="M20 1L15.5 6L20 11zM24.5 1L20 6L24.5 11z" fill="#a8a8a8"/><path d="M38.5 1L34 6L38.5 11z" fill="#a8a8a8"/><path d="M48 1L53 6L48 11z" fill="#000"/><path d="M60.5 1L65 6L60.5 11zM65 1L69.5 6L65 11z" fill="#000"/><path d="M75 1L79.5 6L75 11zM79.5 1L84 6L79.5 11z" fill="#000"/><path d="M85 1v10" stroke="#000" stroke-width="1.5"/><path d="M95.5 2v8M91.5 6h8M92.5 3l6 6M98.5 3l-6 6" stroke="#000" stroke-width="1.2"/><circle cx="95.5" cy="6" r="1" fill="#2040c0"/><path d="M105 0l3 3-3 3z" fill="#a8a8a8"/><path d="M111.5 4v8M107.5 8h8M108.5 5l6 6M114.5 5l-6 6" stroke="#a8a8a8" stroke-width="1.2"/><path d="M120.5 1.5h10l-3.5 4.5v5h-3v-5z" fill="none" stroke="#000" stroke-width="1.4"/></svg>
<div class="ab" style="left:433px;top:782px;width:16px;height:17px;background:#f0f0f0;border:1px solid #c8c8c8"></div>
<svg style="left:437px;top:786px" width="8" height="9"><path d="M6 0L1 4.5L6 9z" fill="#a0a0a0"/></svg>
<div class="ab" style="left:1626px;top:782px;width:16px;height:17px;background:#f0f0f0;border:1px solid #c8c8c8"></div>
<svg style="left:1631px;top:786px" width="8" height="9"><path d="M1 0L6 4.5L1 9z" fill="#a0a0a0"/></svg>
<div class="ab" style="left:1643px;top:68px;width:24px;height:780px;background:#f5f5f5"></div>
<div class="ab" style="left:1646px;top:71px;width:20px;height:91px;background:#f0f0f0;border:1px solid #707070;border-right:none"></div>
<svg style="left:1650px;top:77px" width="18" height="18" viewBox="0 0 18 18"><rect x="0" y="0" width="12" height="12" fill="#f3cf50" stroke="#c8a030"/><circle cx="6" cy="4" r="2.2" fill="#222"/><rect x="3.5" y="6" width="5" height="6" fill="#1a4a90"/></svg>
<div class="t" style="left:1649px;top:101px;width:14px;font-size:12px;line-height:12px;white-space:normal;color:#606060">用户注释</div>
<div class="ab" style="left:1646px;top:173px;width:20px;height:91px;background:#f0f0f0;border:1px solid #707070;border-right:none"></div>
<svg style="left:1650px;top:179px" width="18" height="18" viewBox="0 0 18 18"><path d="M0.5 0.5h7l4 4v9H0.5z" fill="#e8f6f6" stroke="#2a9a9a"/><path d="M2 6h8M2 8.5h8M2 11h8M4 4v9M7 4v9" stroke="#2a9a9a" stroke-width="0.7"/></svg>
<div class="t" style="left:1649px;top:203px;width:14px;font-size:12px;line-height:12px;white-space:normal;color:#606060">原始数据</div>
<div class="ab" style="left:1646px;top:275px;width:20px;height:75px;background:#f0f0f0;border:1px solid #707070;border-right:none"></div>
<svg style="left:1650px;top:281px" width="18" height="18" viewBox="0 0 18 18"><rect x="0.5" y="0.5" width="7" height="8" fill="#fff" stroke="#2a9a9a"/><path d="M2 7V3" stroke="#b02020" stroke-width="1.4"/><rect x="5" y="4" width="7" height="8" fill="#e8f6f6" stroke="#2a9a9a"/></svg>
<div class="t" style="left:1649px;top:305px;width:14px;font-size:12px;line-height:12px;white-space:normal;color:#606060">图数据</div>
<div class="ab" style="left:1665px;top:0px;width:2px;height:18px;background:#f07020"></div>
<div class="ab" style="left:1665px;top:18px;width:2px;height:146px;background:#3a80f0"></div>
<div class="ab" style="left:1665px;top:164px;width:2px;height:32px;background:#f07020;border-radius:1px"></div>
<div class="ab" style="left:1665px;top:196px;width:2px;height:98px;background:#3a80f0"></div>
<div class="ab" style="left:1665px;top:294px;width:1px;height:553px;background:#a0a0a0"></div>
<div class="ab" style="left:3px;top:803px;width:145px;height:20px;background:#f0f0f0;border:1px solid #7a7a7a;border-bottom:none"></div>
<svg style="left:7px;top:805px" width="18" height="18" viewBox="0 0 18 18"><ellipse cx="8" cy="7" rx="6.5" ry="5.5" fill="#fff" stroke="#5aa0d0"/><path d="M4 11l-2 4 5-3" fill="#fff" stroke="#5aa0d0"/><path d="M8 4v4M8 9.5v1" stroke="#000" stroke-width="1.4"/></svg>
<div class="t" style="left:32px;top:807px;font-size:12px;color:#555">Controller 输出消息</div>
<div class="ab" style="left:0px;top:826px;width:1667px;height:21px;background:#f0f0f0;border-top:1px solid #a0a0a0;border-bottom:1px solid #d0d0d0"></div>
<div class="ab" style="left:3px;top:827px;width:200px;height:18px;border:1px solid #c8c8c8"></div>
<div class="ab" style="left:204px;top:827px;width:78px;height:18px;border:1px solid #c8c8c8"></div>
<div class="ab" style="left:283px;top:827px;width:350px;height:18px;border:1px solid #c8c8c8"></div>
<div class="ab" style="left:634px;top:827px;width:1030px;height:18px;border:1px solid #c8c8c8"></div>
<svg style="left:4px;top:827px" width="18" height="18" viewBox="0 0 18 18"><path d="M1 4l6-3 6 3v9l-6 3-6-3z" fill="#fff" stroke="#7a8a20"/><path d="M1 4l6 3 6-3M7 7v9" stroke="#7a8a20" fill="none"/></svg>
<div class="t" style="left:21px;top:829px;font-size:12px">完整数据</div>
<div class="ab" style="left:0px;top:847px;width:1667px;height:41px;background:linear-gradient(90deg,#233a43 0%,#223942 33%,#1f2f3e 64%,#1e2c3e 78%,#1b2843 100%)"></div>
<svg style="left:16px;top:860px" width="17" height="17"><path d="M0 2.3L7 1.3V8H0zM8 1.2L17 0V8H8zM0 9h7v6.7L0 14.7zM8 9h9v8L8 15.8z" fill="#fff"/></svg>
<div class="ab" style="left:55px;top:886px;width:152px;height:2px;background:#76b9ed"></div>
<svg style="left:61px;top:856px" width="24" height="24" viewBox="0 0 24 24"><path d="M12 15.5L14.5 19.5A5.2 5.2 0 1 0 18.5 10.5" fill="none" stroke="#c8c8c8" stroke-width="3.4"/><path d="M12 10.5H7A5 5 0 0 0 7 20.5H10" fill="none" stroke="#f8c830" stroke-width="3.4"/><path d="M6.5 9A5.5 5.5 0 0 1 17.5 8Q17.5 12 14 16.5" fill="none" stroke="#c8c8c8" stroke-width="3.4"/><path d="M8.5 14.5L12 18" fill="none" stroke="#c8c8c8" stroke-width="3.4"/></svg>
<div class="t" style="left:89px;top:861px;font-size:13px;color:#fff">login1 - Virtual U...</div>
<div class="ab" style="left:216px;top:886px;width:152px;height:2px;background:#76b9ed"></div>
<svg style="left:226px;top:857px" width="16" height="20"><path d="M1 3l9-2v18l-9-2z" fill="#e8c050"/><path d="M5 4h10v13H5z" fill="#f8d870"/></svg>
<div class="t" style="left:250px;top:861px;font-size:13px;color:#fff">C:\Users\Adminis...</div>
<div class="ab" style="left:376px;top:886px;width:152px;height:2px;background:#76b9ed"></div>
<svg style="left:386px;top:857px" width="16" height="20"><path d="M1 3l9-2v18l-9-2z" fill="#e8c050"/><path d="M5 4h10v13H5z" fill="#f8d870"/></svg>
<div class="t" style="left:410px;top:861px;font-size:13px;color:#fff">C:\Users\Adminis...</div>
<div class="ab" style="left:537px;top:886px;width:152px;height:2px;background:#76b9ed"></div>
<svg style="left:543px;top:855px" width="24" height="24"><ellipse cx="12" cy="12" rx="9" ry="8" fill="none" stroke="#40a0e8" stroke-width="4"/><path d="M4 13h16" stroke="#40a0e8" stroke-width="3"/><path d="M2 18C6 6 18 2 22 4" stroke="#f0c030" stroke-width="2" fill="none"/></svg>
<div class="t" style="left:571px;top:861px;font-size:13px;color:#fff">Web Tours - Inte...</div>
<div class="ab" style="left:698px;top:886px;width:152px;height:2px;background:#76b9ed"></div>
<svg style="left:704px;top:856px" width="24" height="24" viewBox="0 0 24 24"><path d="M12 15.5L14.5 19.5A5.2 5.2 0 1 0 18.5 10.5" fill="none" stroke="#20b050" stroke-width="3.4"/><path d="M12 10.5H7A5 5 0 0 0 7 20.5H10" fill="none" stroke="#c8c8c8" stroke-width="3.4"/><path d="M6.5 9A5.5 5.5 0 0 1 17.5 8Q17.5 12 14 16.5" fill="none" stroke="#c8c8c8" stroke-width="3.4"/><path d="M8.5 14.5L12 18" fill="none" stroke="#20b050" stroke-width="3.4"/></svg>
<div class="t" style="left:732px;top:861px;font-size:13px;color:#fff">LoadRunner Cont...</div>
<div class="ab" style="left:855px;top:847px;width:160px;height:41px;background:#4d5c67"></div>
<div class="ab" style="left:855px;top:886px;width:160px;height:2px;background:#76b9ed"></div>
<svg style="left:861px;top:856px" width="24" height="24" viewBox="0 0 24 24"><path d="M12 15.5L14.5 19.5A5.2 5.2 0 1 0 18.5 10.5" fill="none" stroke="#c8c8c8" stroke-width="3.4"/><path d="M12 10.5H7A5 5 0 0 0 7 20.5H10" fill="none" stroke="#c8c8c8" stroke-width="3.4"/><path d="M6.5 9A5.5 5.5 0 0 1 17.5 8Q17.5 12 14 16.5" fill="none" stroke="#5f7f98" stroke-width="3.4"/><path d="M8.5 14.5L12 18" fill="none" stroke="#c8c8c8" stroke-width="3.4"/></svg>
<div class="t" style="left:889px;top:861px;font-size:13px;color:#fff">LoadRunner Anal...</div>
<svg style="left:1354px;top:859px" width="18" height="18" viewBox="0 0 18 18"><path d="M2 8Q0 8 0.5 5.5Q1 3 3.5 3.5Q4.5 1 7.5 1.5Q10 0.5 11.5 3Q15 2.5 15.5 5.5Q16.5 8.5 13 8.5z" fill="#e8e8e8" stroke="#808080" stroke-width="0.8"/><path d="M5 4L7 7M8 4L10 7" stroke="#505050" stroke-width="0.8"/><path d="M9 11L14 16M14 11L9 16" stroke="#c02010" stroke-width="1.6"/><path d="M8 10L13 15" stroke="#201010" stroke-width="0.8"/></svg>
<svg style="left:1379px;top:859px" width="18" height="18" viewBox="0 0 18 18"><path d="M2 8Q0 8 0.5 5.5Q1 3 3.5 3.5Q4.5 1 7.5 1.5Q10 0.5 11.5 3Q15 2.5 15.5 5.5Q16.5 8.5 13 8.5z" fill="#e8e8e8" stroke="#808080" stroke-width="0.8"/><path d="M5 4L7 7M8 4L10 7" stroke="#505050" stroke-width="0.8"/><path d="M9 11L14 16M14 11L9 16" stroke="#c02010" stroke-width="1.6"/><path d="M8 10L13 15" stroke="#201010" stroke-width="0.8"/></svg>
<svg style="left:1403px;top:859px" width="17" height="18" viewBox="0 0 17 18"><ellipse cx="8" cy="9" rx="7" ry="7.5" fill="#30e030" stroke="#102010"/><path d="M4 2.5L12 15.5M12 2.5L4 15.5" stroke="#b8b8b8" stroke-width="3.2"/><path d="M4 2.5L12 15.5" stroke="#e0e0e0" stroke-width="1.2"/></svg>
<svg style="left:1428px;top:859px" width="15" height="18" viewBox="0 0 15 18"><path d="M1 3Q1 11 9 14L12 11Q5 9 3 1z" fill="#c8c8c8" stroke="#606060" stroke-width="0.8"/><path d="M6 8L12 2" stroke="#2030a0" stroke-width="1.2"/><path d="M11 1L13 3" stroke="#e0c020" stroke-width="1.4"/><path d="M3 17L6 12L8 17z" fill="#e0e0e0" stroke="#404040" stroke-width="0.6"/></svg>
<svg style="left:1453px;top:859px" width="15" height="18" viewBox="0 0 15 18"><rect x="2.5" y="5.5" width="8" height="11" rx="1" fill="none" stroke="#fff" stroke-width="1.1"/><rect x="4" y="1.5" width="5" height="4" fill="none" stroke="#fff" stroke-width="1.1"/><path d="M5.5 3V4M7.5 3V4" stroke="#fff"/><path d="M9.5 14L11 16L14.5 11.5" fill="none" stroke="#fff" stroke-width="1"/></svg>
<svg style="left:1474px;top:860px" width="18" height="16" viewBox="0 0 18 16"><path d="M1.5 5.5H4.5L8.5 1.5V14.5L4.5 10.5H1.5z" fill="none" stroke="#fff" stroke-width="1.1"/><path d="M10.5 5.5Q12 8 10.5 10.5M12.5 3.5Q15 8 12.5 12.5M14.5 1.5Q18 8 14.5 14.5" fill="none" stroke="#fff" stroke-width="1.1"/></svg>
<svg style="left:1498px;top:860px" width="18" height="16" viewBox="0 0 18 16"><rect x="4.5" y="2.5" width="12" height="9" fill="none" stroke="#fff" stroke-width="1.1"/><path d="M10.5 11.5V14M7 14.5H14" stroke="#fff" stroke-width="1.1"/><rect x="0.5" y="2.5" width="3" height="3" fill="none" stroke="#fff"/><path d="M2 5.5V15" stroke="#fff" stroke-width="1.1"/></svg>
<div class="t" style="left:1520px;top:858px;font-size:17px;color:#fff">英</div>
<div class="t" style="left:1563px;top:852px;font-size:12px;color:#fff">23:42</div>
<div class="t" style="left:1548px;top:871px;font-size:13px;color:#fff">2026/1/15</div>
<svg style="left:1625px;top:859px" width="20" height="19"><path d="M0.5 0.5h17v12h-8l-4 4v-4h-5z" fill="none" stroke="#fff"/></svg>
<svg style="left:1336px;top:876px" width="38" height="12"><path d="M0 12V8Q0 6 2 5.5L30 1Q35 0 35.5 4V12z" fill="#f26a30"/></svg>
<div class="ab" style="left:1371px;top:882px;width:159px;height:6px;background:#fff;border-radius:2px 2px 0 0"></div>
<div class="ab" style="left:1662px;top:848px;width:1px;height:40px;background:#56657a"></div>
</body></html>
